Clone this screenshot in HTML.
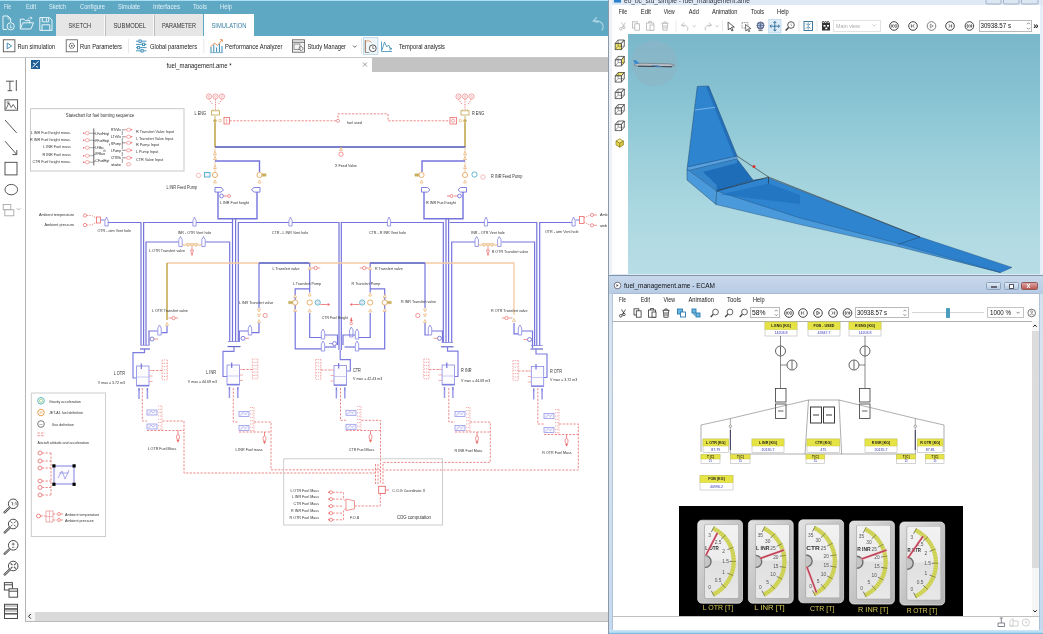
<!DOCTYPE html>
<html><head><meta charset="utf-8"><title>fuel management</title>
<style>
*{box-sizing:border-box;margin:0;padding:0}
html,body{width:1043px;height:634px;overflow:hidden;background:#fff}
body{position:relative;filter:blur(0.35px);font-family:"Liberation Sans",sans-serif;color:#222}
.abs{position:absolute}
svg{position:absolute;left:0;top:0;overflow:visible}
svg text{font-family:"Liberation Sans",sans-serif}
.t{position:absolute;white-space:nowrap;line-height:1}
</style></head>
<body>
<div class="abs" style="left:0;top:0;width:608.5px;height:35.7px;background:#5fa8c3"></div>
<div class="abs" style="left:0;top:0;width:608.5px;height:1.2px;background:#a9def3"></div>
<div class="abs" style="left:56px;top:14px;width:48.5px;height:21.5px;background:#e6e6e6"></div>
<div class="abs" style="left:105px;top:14px;width:48.5px;height:21.5px;background:#e6e6e6"></div>
<div class="abs" style="left:154px;top:14px;width:49px;height:21.5px;background:#e6e6e6"></div>
<div class="abs" style="left:203.5px;top:14px;width:50.0px;height:22.2px;background:#fff"></div>
<div class="abs" style="left:104.1px;top:14.5px;width:0.6px;height:21px;background:#f8fbfd"></div>
<div class="abs" style="left:104.8px;top:14.5px;width:0.5px;height:21px;background:#bcbcbc"></div>
<div class="abs" style="left:153.1px;top:14.5px;width:0.6px;height:21px;background:#f8fbfd"></div>
<div class="abs" style="left:153.8px;top:14.5px;width:0.5px;height:21px;background:#bcbcbc"></div>
<div class="abs" style="left:0;top:35.7px;width:608.5px;height:21.5px;background:#fff"></div>
<div class="abs" style="left:0;top:57px;width:608.5px;height:0.8px;background:#c8c8c8"></div>
<div class="abs" style="left:25px;top:57.5px;width:347px;height:15px;background:#fff;border-left:1px solid #bdbdbd"></div>
<div class="abs" style="left:372px;top:58px;width:236.5px;height:13.5px;background:#c3c3c3"></div>
<div class="abs" style="left:24.6px;top:57.5px;width:1.1px;height:563.5px;background:#b4b4b4"></div>
<div class="abs" style="left:26px;top:612px;width:582.5px;height:8.5px;background:#f4f4f4"></div>
<div class="abs" style="left:35px;top:612px;width:573.5px;height:8.5px;background:#dadada"></div>
<div class="abs" style="left:25px;top:620.6px;width:583.5px;height:1px;background:#b8b8b8"></div>
<div class="abs" style="left:608.3px;top:0;width:434.7px;height:276px;background:#dfe9f5"></div>
<div class="abs" style="left:608.3px;top:0;width:0.9px;height:634px;background:#8c9aa8"></div>
<div class="abs" style="left:609.2px;top:0;width:3.3px;height:276px;background:#edf2f9"></div>
<div class="abs" style="left:612px;top:4.6px;width:428px;height:29.4px;background:#fff"></div>
<div class="abs" style="left:612px;top:34px;width:15.6px;height:240px;background:#fff"></div>
<div class="abs" style="left:627.6px;top:33.8px;width:412px;height:240.4px;background:linear-gradient(180deg,#79b7ca 0%,#87c2d2 25%,#9bcfda 50%,#acd8e1 75%,#b8dde5 100%)"></div>
<div class="abs" style="left:1039.6px;top:4.6px;width:3.4px;height:270px;background:#e6eef8"></div>
<div class="abs" style="left:833px;top:20px;width:47.5px;height:11.6px;background:#fff;border:0.8px solid #e2e2e2"></div>
<div class="abs" style="left:979px;top:20px;width:53px;height:11.6px;background:#fff;border:0.8px solid #b8b8b8"></div>
<div class="t" style="left:1033.3px;top:20.6px;font-size:9.5px;color:#111;font-weight:bold">&raquo;</div>
<div class="abs" style="left:608.8px;top:275.4px;width:434.2px;height:358.6px;background:linear-gradient(180deg,#d2e0ef 0%,#dae5f1 30%,#cfdff0 70%,#c4d9ef 100%)"></div>
<div class="abs" style="left:609.2px;top:274.6px;width:433.8px;height:1px;background:#7f95ab"></div>
<div class="abs" style="left:609.2px;top:276px;width:433.8px;height:18px;background:linear-gradient(180deg,#c9d9ec,#b6cbe4)"></div>
<div class="abs" style="left:612.8px;top:294px;width:426.4px;height:335.8px;background:#fff;box-shadow:0 0 0 0.6px #9eb2c8"></div>
<div class="abs" style="left:608.8px;top:630.2px;width:434.2px;height:3.8px;background:linear-gradient(180deg,#cfe6f5 0%,#b4dcf2 60%,#5caed6 100%)"></div>
<div class="abs" style="left:612.3px;top:320.6px;width:426.7px;height:0.8px;background:#b0b0b0"></div>
<div class="abs" style="left:986px;top:281.6px;width:15.2px;height:8.8px;background:linear-gradient(180deg,#e0eaf5,#b6cae2);border:0.8px solid #8ea2bb;border-radius:1.5px"></div>
<div class="abs" style="left:1003.5px;top:281.6px;width:15.5px;height:8.8px;background:linear-gradient(180deg,#e0eaf5,#b6cae2);border:0.8px solid #8ea2bb;border-radius:1.5px"></div>
<div class="abs" style="left:1021.4px;top:281.6px;width:16.6px;height:8.8px;background:linear-gradient(180deg,#dca6a6,#bd5852);border:0.8px solid #8e5a5a;border-radius:1.5px"></div>
<div class="abs" style="left:990.5px;top:286.3px;width:6px;height:2.2px;background:#fff;border:0.5px solid #667"></div>
<div class="abs" style="left:1008.5px;top:284px;width:5.5px;height:4.5px;background:#fff;border:0.8px solid #556"></div>
<div class="t" style="left:1026.5px;top:282.4px;font-size:7px;color:#fff;font-weight:bold">x</div>
<div class="abs" style="left:749.6px;top:307.3px;width:30px;height:11px;background:#fff;border:0.8px solid #bbb"></div>
<div class="abs" style="left:855px;top:307.3px;width:53.5px;height:11px;background:#fff;border:0.8px solid #bbb"></div>
<div class="abs" style="left:912.4px;top:312.4px;width:71.6px;height:0.9px;background:#d4d4d4"></div>
<div class="abs" style="left:945.7px;top:308px;width:4.3px;height:9.6px;background:#4b9cbd;border-radius:0.8px"></div>
<div class="abs" style="left:987px;top:307.3px;width:37px;height:11px;background:#fff;border:0.8px solid #c4c4c4"></div>
<div class="abs" style="left:1031.5px;top:321.4px;width:7.2px;height:294.5px;background:#f6f6f6"></div>
<div class="abs" style="left:1031.5px;top:331px;width:7.2px;height:236.5px;background:#dcdcdc"></div>
<div class="abs" style="left:612.3px;top:615.8px;width:426.7px;height:0.7px;background:#c0c0c0"></div>
<div class="abs" style="left:679.2px;top:506.3px;width:284.3px;height:109.5px;background:#000"></div>
<svg width="1043" height="634" viewBox="0 0 1043 634">
<g fill="none" stroke="#e8f4f9" stroke-width="1.0"><path d="M3 16 h5 l2.6 2.6 v3.4 M3 16 v13.4 h4"/><path d="M8 16 v2.8 h2.6" stroke-width="0.7"/><circle cx="10.7" cy="26.3" r="3.6"/><path d="M10.7 24.3 v3.6 M9.2 26.6 l1.5 1.5 l1.5 -1.5" stroke-width="0.7"/><path d="M20.3 29 v-9.8 h3.8 l1.2 1.4 h4.4 v2.2"/><path d="M20.3 29 l2.6 -6.2 h10.6 l-2.6 6.2 Z"/><path d="M27.5 19.5 q2 -2.5 4.6 -1.6 m0 0 l-1.8 -1.2 m1.8 1.2 l-1.2 1.7" stroke-width="0.7"/><path d="M39.8 17.6 h9.6 l2.6 2.4 v10.4 h-12.2 Z"/><path d="M42.3 17.6 v4.2 h6.4 v-4.2 M46.5 18.3 v2.5 M42 30.4 v-5.6 h7.8 v5.6"/></g>
<path d="M596.5 17.5 l-3.3 3.6 l4.3 1.2 M593.6 21 q7.5 -1 9.3 4 q0.8 3 -0.8 5.2" fill="none" stroke="#a9d4e5" stroke-width="1.15" stroke-linecap="round"/>
<rect x="3.3" y="39.8" width="11.6" height="12" fill="#fff" stroke="#444" stroke-width="0.8"/><path d="M7.2 43 l4.4 2.9 l-4.4 2.9 Z" fill="#fff" stroke="#2f7fb0" stroke-width="0.9"/>
<rect x="66.2" y="39.8" width="11.2" height="12" fill="#fff" stroke="#555" stroke-width="0.8"/><circle cx="71.8" cy="45.8" r="2.5" fill="none" stroke="#555" stroke-width="1.1" stroke-dasharray="1 0.6"/><circle cx="71.8" cy="45.8" r="0.9" fill="#555"/>
<g stroke="#3a8ab4" stroke-width="0.9" fill="#fff"><path d="M136 41.2 h10.5 M136 44.4 h10.5 M136 47.6 h10.5 M136 50.8 h10.5" /><rect x="139" y="40" width="2.2" height="2.4"/><rect x="142.5" y="43.2" width="2.2" height="2.4"/><rect x="137.5" y="46.4" width="2.2" height="2.4"/><rect x="141" y="49.6" width="2.2" height="2.4"/></g>
<g fill="none"><path d="M211 52 v-5 M213.8 52 v-7.5 M216.6 52 v-4.5 M219.4 52 v-8.5 M222 52 v-6" stroke="#3a8ab4" stroke-width="1"/><path d="M210.5 47 l4 -4 l3 2.5 l4.5 -5.5" stroke="#e0884a" stroke-width="0.9"/><path d="M220 39.6 h2.3 v2.3" stroke="#e0884a" stroke-width="0.8"/><path d="M210 52.6 h13" stroke="#3a8ab4" stroke-width="0.7"/></g>
<g fill="none" stroke="#555" stroke-width="0.8"><rect x="292.5" y="39.8" width="12" height="12.4" fill="#f2f2f2"/><path d="M292.5 42.3 h12" /><rect x="294" y="44" width="6" height="5.5" stroke-width="0.6"/><circle cx="301" cy="48.5" r="2" stroke-width="1" stroke-dasharray="0.9 0.5"/></g>
<path d="M353 45.5 l1.8 1.8 l1.8 -1.8" fill="none" stroke="#444" stroke-width="0.8"/>
<path d="M361.5 38.5 v15" stroke="#d8d8d8" stroke-width="0.7"/>
<rect x="363.3" y="37.7" width="14.6" height="16.6" fill="#f0f7fb" stroke="#a8cce0" stroke-width="0.7"/>
<g fill="none"><path d="M365.5 52 v-11 q3.5 -1 6 1.2" stroke="#e0884a" stroke-width="0.8"/><path d="M365.2 40 v12.5 h4" stroke="#666" stroke-width="0.7"/><circle cx="372.8" cy="48.3" r="3.4" stroke="#444" stroke-width="0.9" fill="#fff"/><path d="M372.8 46.2 v2.3 h1.6" stroke="#444" stroke-width="0.7"/></g>
<g fill="none"><path d="M381.5 51.5 v-10 M381.5 51.5 h10.5" stroke="#3a8ab4" stroke-width="0.8"/><path d="M382 50 l2.5 -8 l2.3 5 l1.8 -2 l2.2 4.5" stroke="#3a8ab4" stroke-width="0.8"/><path d="M389 47.5 l3 1.2 l-2.7 1.6" stroke="#3a8ab4" stroke-width="0.7"/></g>
<path d="M128.5 39 v14 M203.8 39 v14" stroke="#e0e0e0" stroke-width="0.7"/>
<rect x="31" y="60" width="9" height="9" fill="#1f5f96"/><path d="M32.3 67.5 l6.2 -6.3 M33 63 l2 1 M36 66.3 l2 1" stroke="#fff" stroke-width="1" fill="none"/>
<path d="M363 62.5 l4 4 M367 62.5 l-4 4" stroke="#777" stroke-width="0.7"/>
<g fill="none" stroke="#444" stroke-width="0.9"><path d="M6 81.2 h7.8 M9.9 81.2 v9.5 M7.6 90.7 h4.6 M16.3 80 v11"/><rect x="5" y="99.8" width="12.6" height="10.4"/><path d="M6 109 l2.8 -6 l2.4 4.5 l2 -3 l3 4.5" stroke-width="0.8"/><circle cx="8" cy="102.5" r="1" stroke-width="0.6"/><path d="M5 120 L16.6 132.8"/><path d="M5 141.2 L16.6 154.3 M16.8 150 v4.6 h-4.4"/><rect x="5" y="162.3" width="12" height="12.6"/><ellipse cx="11.3" cy="189.6" rx="6.3" ry="5.2"/></g>
<g fill="#fff" stroke="#a8a8a8" stroke-width="0.9"><rect x="3.2" y="204.5" width="7.6" height="5.2"/><rect x="4.8" y="209.8" width="9" height="6"/><path d="M16.8 208.2 l1.8 1.8 l1.8 -1.8" fill="none"/></g>
<g fill="none" stroke="#4a4a4a" stroke-width="1.0"><path d="M10.0 507.2 L4.6 512.4" stroke-width="2.2" stroke-linecap="round"/><path d="M10.0 507.2 L4.6 512.4" stroke="#fff" stroke-width="0.7" stroke-linecap="round"/><circle cx="13.2" cy="503.8" r="4.8" fill="#fff"/><path d="M11.3 502.3 h1.2 v3 M14.2 503 v0.5 M14.2 504.8 v0.5 M15.3 502.3 h0.8 v3" stroke-width="0.7"/></g>
<g fill="none" stroke="#4a4a4a" stroke-width="1.0"><path d="M10.0 527.4 L4.6 532.6" stroke-width="2.2" stroke-linecap="round"/><path d="M10.0 527.4 L4.6 532.6" stroke="#fff" stroke-width="0.7" stroke-linecap="round"/><circle cx="13.2" cy="524" r="4.8" fill="#fff"/><path d="M10.6 521.4 l1.8 1.8 M15.8 521.4 l-1.8 1.8 M10.6 526.6 l1.8 -1.8 M15.8 526.6 l-1.8 -1.8" stroke-width="0.9"/></g>
<g fill="none" stroke="#4a4a4a" stroke-width="1.0"><path d="M10.0 548.6999999999999 L4.6 553.9" stroke-width="2.2" stroke-linecap="round"/><path d="M10.0 548.6999999999999 L4.6 553.9" stroke="#fff" stroke-width="0.7" stroke-linecap="round"/><circle cx="13.2" cy="545.3" r="4.8" fill="#fff"/><path d="M13.2 542.6 v3 M11.7 544.1 h3 M12 547.3 h2.4" stroke-width="0.7"/></g>
<g fill="none" stroke="#4a4a4a" stroke-width="1.0"><path d="M10.0 569.4 L4.6 574.6" stroke-width="2.2" stroke-linecap="round"/><path d="M10.0 569.4 L4.6 574.6" stroke="#fff" stroke-width="0.7" stroke-linecap="round"/><circle cx="13.2" cy="566" r="4.8" fill="#fff"/><path d="M10.6 563.4 l1.8 1.8 M15.8 563.4 l-1.8 1.8 M10.6 568.6 l1.8 -1.8 M15.8 568.6 l-1.8 -1.8" stroke-width="1.1"/></g>
<g fill="#fff" stroke="#4a4a4a" stroke-width="1"><rect x="4.4" y="582.6" width="8" height="7.4"/><path d="M4.4 584.8 h8"/><rect x="9" y="588.8" width="8.6" height="8.4"/><path d="M9 591.2 h8.6"/></g>
<g fill="#fff" stroke="#4a4a4a" stroke-width="1"><rect x="4.5" y="604.3" width="13" height="4.5"/><rect x="4.5" y="609.2" width="13" height="4.5"/><rect x="4.5" y="614" width="13" height="4.5"/><path d="M4.5 606 h13 M4.5 611 h13" stroke-width="0.6"/></g>
<path d="M30.8 614 l-2.2 2.3 l2.2 2.3" fill="none" stroke="#222" stroke-width="1"/>
<rect x="30.5" y="108.7" width="153.5" height="62.3" fill="#fff" stroke="#c4c4c4" stroke-width="0.9" />
<text x="100.0" y="117.1" font-size="4.56" text-anchor="middle" fill="#333" font-weight="normal" textLength="68.3" lengthAdjust="spacingAndGlyphs" >Statechart for fuel burning sequence</text>
<text x="71.0" y="133.5" font-size="4.37" text-anchor="end" fill="#333" font-weight="normal" textLength="40.3" lengthAdjust="spacingAndGlyphs" >L INR Fuel height meas.</text>
<path d="M83 132.2 l2 1 l-2 1 Z" fill="#ea6a6a"/>
<ellipse cx="87.2" cy="133.2" rx="2" ry="1.6" fill="#fff" stroke="#f08c8c" stroke-width="0.7"/>
<path d="M89.2 133.2 L93.8 133.2" fill="none" stroke="#555" stroke-width="0.5" />
<text x="71.0" y="140.5" font-size="4.37" text-anchor="end" fill="#333" font-weight="normal" textLength="41.1" lengthAdjust="spacingAndGlyphs" >R INR Fuel height meas.</text>
<path d="M83 139.2 l2 1 l-2 1 Z" fill="#ea6a6a"/>
<ellipse cx="87.2" cy="140.2" rx="2" ry="1.6" fill="#fff" stroke="#f08c8c" stroke-width="0.7"/>
<path d="M89.2 140.2 L93.8 140.2" fill="none" stroke="#555" stroke-width="0.5" />
<text x="71.0" y="148.0" font-size="4.37" text-anchor="end" fill="#333" font-weight="normal" textLength="27.8" lengthAdjust="spacingAndGlyphs" >L INR Fuel mass</text>
<path d="M83 146.7 l2 1 l-2 1 Z" fill="#ea6a6a"/>
<ellipse cx="87.2" cy="147.7" rx="2" ry="1.6" fill="#fff" stroke="#f08c8c" stroke-width="0.7"/>
<path d="M89.2 147.7 L93.8 147.7" fill="none" stroke="#555" stroke-width="0.5" />
<text x="71.0" y="156.0" font-size="4.37" text-anchor="end" fill="#333" font-weight="normal" textLength="28.6" lengthAdjust="spacingAndGlyphs" >R INR Fuel mass</text>
<path d="M83 154.7 l2 1 l-2 1 Z" fill="#ea6a6a"/>
<ellipse cx="87.2" cy="155.7" rx="2" ry="1.6" fill="#fff" stroke="#f08c8c" stroke-width="0.7"/>
<path d="M89.2 155.7 L93.8 155.7" fill="none" stroke="#555" stroke-width="0.5" />
<text x="71.0" y="162.5" font-size="4.37" text-anchor="end" fill="#333" font-weight="normal" textLength="38.6" lengthAdjust="spacingAndGlyphs" >CTR Fuel height meas.</text>
<path d="M83 161.2 l2 1 l-2 1 Z" fill="#ea6a6a"/>
<ellipse cx="87.2" cy="162.2" rx="2" ry="1.6" fill="#fff" stroke="#f08c8c" stroke-width="0.7"/>
<path d="M89.2 162.2 L93.8 162.2" fill="none" stroke="#555" stroke-width="0.5" />
<path d="M93.8 128.4 L93.8 165.4" fill="none" stroke="#222" stroke-width="0.7" />
<text x="95.6" y="134.6" font-size="3.4" fill="#222" textLength="13.5" lengthAdjust="spacingAndGlyphs">LFuelHeigt</text>
<path d="M93.8 133.5 L95.4 133.5" fill="none" stroke="#333" stroke-width="0.5" />
<text x="95.6" y="141.7" font-size="3.4" fill="#222" textLength="13.5" lengthAdjust="spacingAndGlyphs">RFuelHeigt</text>
<path d="M93.8 140.6 L95.4 140.6" fill="none" stroke="#333" stroke-width="0.5" />
<text x="95.6" y="148.5" font-size="3.4" fill="#222" textLength="9.5" lengthAdjust="spacingAndGlyphs">LFMas_</text>
<path d="M93.8 147.4 L95.4 147.4" fill="none" stroke="#333" stroke-width="0.5" />
<text x="95.6" y="155.4" font-size="3.4" fill="#222" textLength="9.5" lengthAdjust="spacingAndGlyphs">RFMass</text>
<path d="M93.8 154.3 L95.4 154.3" fill="none" stroke="#333" stroke-width="0.5" />
<text x="95.6" y="162.4" font-size="3.4" fill="#222" textLength="13.5" lengthAdjust="spacingAndGlyphs">CFuelHgt</text>
<path d="M93.8 161.3 L95.4 161.3" fill="none" stroke="#333" stroke-width="0.5" />
<text x="111" y="130.6" font-size="3.4" fill="#222" textLength="10" lengthAdjust="spacingAndGlyphs">RTrVlv</text>
<text x="111" y="138.0" font-size="3.4" fill="#222" textLength="10" lengthAdjust="spacingAndGlyphs">LTrVlv</text>
<text x="111" y="144.8" font-size="3.4" fill="#222" textLength="10" lengthAdjust="spacingAndGlyphs">RPump</text>
<text x="111" y="151.7" font-size="3.4" fill="#222" textLength="10" lengthAdjust="spacingAndGlyphs">LPump</text>
<text x="111" y="158.5" font-size="3.4" fill="#222" textLength="10" lengthAdjust="spacingAndGlyphs">CTRVlv</text>
<text x="111" y="165.9" font-size="3.4" fill="#222" textLength="10" lengthAdjust="spacingAndGlyphs">state</text>
<path d="M109.5 143.5 L109.5 145.5" fill="none" stroke="#333" stroke-width="0.5" />
<path d="M103.0 151.0 L106.0 151.0" fill="none" stroke="#333" stroke-width="0.6" />
<path d="M122.3 131.0 L122.3 135.0" fill="none" stroke="#333" stroke-width="0.5" />
<path d="M122.3 138.0 L122.3 149.0" fill="none" stroke="#333" stroke-width="0.5" />
<path d="M122.3 152.0 L122.3 156.0" fill="none" stroke="#333" stroke-width="0.5" />
<path d="M122.3 159.0 L122.3 163.0" fill="none" stroke="#333" stroke-width="0.5" />
<text x="136.0" y="132.5" font-size="4.37" text-anchor="start" fill="#333" font-weight="normal" textLength="38.1" lengthAdjust="spacingAndGlyphs" >R Transfert Valve Input</text>
<path d="M122.0 129.8 L125.0 129.8" fill="none" stroke="#444" stroke-width="0.6" />
<ellipse cx="128.6" cy="129.8" rx="2.1" ry="1.6" fill="#fff" stroke="#f08c8c" stroke-width="0.7"/>
<path d="M125.0 129.8 L126.5 129.8" fill="none" stroke="#ea6a6a" stroke-width="0.7" />
<path d="M130.7 128.8 l2 1 l-2 1 Z" fill="#ea6a6a"/>
<text x="136.0" y="139.5" font-size="4.37" text-anchor="start" fill="#333" font-weight="normal" textLength="37.3" lengthAdjust="spacingAndGlyphs" >L Transfert Valve Input</text>
<path d="M122.0 136.8 L125.0 136.8" fill="none" stroke="#444" stroke-width="0.6" />
<ellipse cx="128.6" cy="136.8" rx="2.1" ry="1.6" fill="#fff" stroke="#f08c8c" stroke-width="0.7"/>
<path d="M125.0 136.8 L126.5 136.8" fill="none" stroke="#ea6a6a" stroke-width="0.7" />
<path d="M130.7 135.8 l2 1 l-2 1 Z" fill="#ea6a6a"/>
<text x="136.0" y="145.5" font-size="4.37" text-anchor="start" fill="#333" font-weight="normal" textLength="23.0" lengthAdjust="spacingAndGlyphs" >R Pump Input</text>
<path d="M122.0 142.8 L125.0 142.8" fill="none" stroke="#444" stroke-width="0.6" />
<ellipse cx="128.6" cy="142.8" rx="2.1" ry="1.6" fill="#fff" stroke="#f08c8c" stroke-width="0.7"/>
<path d="M125.0 142.8 L126.5 142.8" fill="none" stroke="#ea6a6a" stroke-width="0.7" />
<path d="M130.7 141.8 l2 1 l-2 1 Z" fill="#ea6a6a"/>
<text x="136.0" y="153.0" font-size="4.37" text-anchor="start" fill="#333" font-weight="normal" textLength="22.2" lengthAdjust="spacingAndGlyphs" >L Pump Input</text>
<path d="M122.0 150.3 L125.0 150.3" fill="none" stroke="#444" stroke-width="0.6" />
<ellipse cx="128.6" cy="150.3" rx="2.1" ry="1.6" fill="#fff" stroke="#f08c8c" stroke-width="0.7"/>
<path d="M125.0 150.3 L126.5 150.3" fill="none" stroke="#ea6a6a" stroke-width="0.7" />
<path d="M130.7 149.3 l2 1 l-2 1 Z" fill="#ea6a6a"/>
<text x="136.0" y="160.5" font-size="4.37" text-anchor="start" fill="#333" font-weight="normal" textLength="27.3" lengthAdjust="spacingAndGlyphs" >CTR Valve Input</text>
<path d="M122.0 157.8 L125.0 157.8" fill="none" stroke="#444" stroke-width="0.6" />
<ellipse cx="128.6" cy="157.8" rx="2.1" ry="1.6" fill="#fff" stroke="#f08c8c" stroke-width="0.7"/>
<path d="M125.0 157.8 L126.5 157.8" fill="none" stroke="#ea6a6a" stroke-width="0.7" />
<path d="M130.7 156.8 l2 1 l-2 1 Z" fill="#ea6a6a"/>
<ellipse cx="128.6" cy="164.3" rx="2.1" ry="1.6" fill="#fff" stroke="#f08c8c" stroke-width="0.7"/>
<circle cx="209.0" cy="96.5" r="2.6" fill="#fff" stroke="#f08c8c" stroke-width="0.8"/>
<circle cx="209.0" cy="96.5" r="0.9" fill="#fff" stroke="#f08c8c" stroke-width="0.5"/>
<path d="M209.0 99.1 L212.6 104.5" fill="none" stroke="#ea6a6a" stroke-width="0.7" stroke-dasharray="1.4 0.9" />
<circle cx="215.5" cy="96.5" r="2.6" fill="#fff" stroke="#f08c8c" stroke-width="0.8"/>
<circle cx="215.5" cy="96.5" r="0.9" fill="#fff" stroke="#f08c8c" stroke-width="0.5"/>
<path d="M215.5 99.1 L215.5 104.5" fill="none" stroke="#ea6a6a" stroke-width="0.7" stroke-dasharray="1.4 0.9" />
<circle cx="222.0" cy="96.5" r="2.6" fill="#fff" stroke="#f08c8c" stroke-width="0.8"/>
<circle cx="222.0" cy="96.5" r="0.9" fill="#fff" stroke="#f08c8c" stroke-width="0.5"/>
<path d="M222.0 99.1 L218.4 104.5" fill="none" stroke="#ea6a6a" stroke-width="0.7" stroke-dasharray="1.4 0.9" />
<path d="M215.5 104.0 L215.5 110.5" fill="none" stroke="#ea6a6a" stroke-width="0.7" stroke-dasharray="1.4 0.9" />
<rect x="211.5" y="110.8" width="8.0" height="4.2" fill="#fff" stroke="#c9b060" stroke-width="0.9" />
<path d="M213.0 110.8 L213.0 109.3" fill="none" stroke="#c9b060" stroke-width="0.8" />
<path d="M218.0 110.8 L218.0 109.3" fill="none" stroke="#c9b060" stroke-width="0.8" />
<text x="206.0" y="114.6" font-size="4.46" text-anchor="end" fill="#333" font-weight="normal" textLength="11.4" lengthAdjust="spacingAndGlyphs" >L ENG</text>
<circle cx="458.5" cy="96.5" r="2.6" fill="#fff" stroke="#f08c8c" stroke-width="0.8"/>
<circle cx="458.5" cy="96.5" r="0.9" fill="#fff" stroke="#f08c8c" stroke-width="0.5"/>
<path d="M458.5 99.1 L462.1 104.5" fill="none" stroke="#ea6a6a" stroke-width="0.7" stroke-dasharray="1.4 0.9" />
<circle cx="465.0" cy="96.5" r="2.6" fill="#fff" stroke="#f08c8c" stroke-width="0.8"/>
<circle cx="465.0" cy="96.5" r="0.9" fill="#fff" stroke="#f08c8c" stroke-width="0.5"/>
<path d="M465.0 99.1 L465.0 104.5" fill="none" stroke="#ea6a6a" stroke-width="0.7" stroke-dasharray="1.4 0.9" />
<circle cx="471.5" cy="96.5" r="2.6" fill="#fff" stroke="#f08c8c" stroke-width="0.8"/>
<circle cx="471.5" cy="96.5" r="0.9" fill="#fff" stroke="#f08c8c" stroke-width="0.5"/>
<path d="M471.5 99.1 L467.9 104.5" fill="none" stroke="#ea6a6a" stroke-width="0.7" stroke-dasharray="1.4 0.9" />
<path d="M465.0 104.0 L465.0 110.5" fill="none" stroke="#ea6a6a" stroke-width="0.7" stroke-dasharray="1.4 0.9" />
<rect x="461.0" y="110.8" width="8.0" height="4.2" fill="#fff" stroke="#c9b060" stroke-width="0.9" />
<path d="M462.5 110.8 L462.5 109.3" fill="none" stroke="#c9b060" stroke-width="0.8" />
<path d="M467.5 110.8 L467.5 109.3" fill="none" stroke="#c9b060" stroke-width="0.8" />
<text x="472.0" y="114.6" font-size="4.46" text-anchor="start" fill="#333" font-weight="normal" textLength="12.2" lengthAdjust="spacingAndGlyphs" >R ENG</text>
<circle cx="215.0" cy="120.7" r="1.5" fill="#c9b060" stroke="#c9b060" stroke-width="0.6"/>
<path d="M215.0 116.0 L215.0 119.0" fill="none" stroke="#c9b060" stroke-width="0.9" />
<circle cx="220.0" cy="120.7" r="1.3" fill="#fff" stroke="#e8a860" stroke-width="0.6"/>
<rect x="224.0" y="117.5" width="5.5" height="6.5" fill="#fff" stroke="#ea6a6a" stroke-width="0.8" />
<path d="M226.7 118.5 L226.7 123.0" fill="none" stroke="#ea6a6a" stroke-width="0.6" />
<circle cx="465.0" cy="120.7" r="1.5" fill="#c9b060" stroke="#c9b060" stroke-width="0.6"/>
<path d="M465.0 116.0 L465.0 119.0" fill="none" stroke="#c9b060" stroke-width="0.9" />
<circle cx="460.5" cy="120.7" r="1.3" fill="#fff" stroke="#e8a860" stroke-width="0.6"/>
<rect x="450.0" y="117.5" width="6.5" height="6.5" fill="#fff" stroke="#ea6a6a" stroke-width="0.8" />
<circle cx="453.2" cy="120.7" r="1.6" fill="#fff" stroke="#ea6a6a" stroke-width="0.6"/>
<path d="M229.5 120.8 L338.0 120.8 L338.0 113.8 L388.0 113.8 L388.0 120.8 L450.0 120.8" fill="none" stroke="#ea6a6a" stroke-width="0.8" stroke-dasharray="2.2 1.4" />
<circle cx="338.0" cy="120.8" r="1.6" fill="#fff" stroke="#ea6a6a" stroke-width="0.6"/>
<text x="347.0" y="124.3" font-size="4.27" text-anchor="start" fill="#333" font-weight="normal" textLength="14.9" lengthAdjust="spacingAndGlyphs" >fuel used</text>
<path d="M215.0 122.5 L215.0 147.0" fill="none" stroke="#c9b060" stroke-width="1.8" />
<path d="M465.0 122.5 L465.0 147.0" fill="none" stroke="#c9b060" stroke-width="1.8" />
<path d="M215.0 147.0 L465.5 147.0" fill="none" stroke="#4c54b8" stroke-width="1.7" />
<path d="M341.0 147.0 L341.0 151.0" fill="none" stroke="#e8a860" stroke-width="0.9" />
<path d="M339.5 150.5 L341.0 147.5 L342.5 150.5 Z" fill="#fff" stroke="#e8a860" stroke-width="0.6"/>
<circle cx="341.0" cy="154.2" r="2.2" fill="#fff" stroke="#ea6a6a" stroke-width="0.7"/>
<text x="346.0" y="166.5" font-size="4.27" text-anchor="middle" fill="#333" font-weight="normal" textLength="21.8" lengthAdjust="spacingAndGlyphs" >X Feed Valve</text>
<path d="M215.0 147.5 L215.0 172.0" fill="none" stroke="#f0c8a0" stroke-width="0.9" />
<path d="M213.5 154.5 L215.0 151.5 L216.5 154.5 Z" fill="#fff" stroke="#e8a860" stroke-width="0.6"/>
<path d="M213.5 159.5 L215.0 156.5 L216.5 159.5 Z" fill="#fff" stroke="#e8a860" stroke-width="0.6"/>
<path d="M213.5 168.5 L215.0 165.5 L216.5 168.5 Z" fill="#fff" stroke="#e8a860" stroke-width="0.6"/>
<path d="M213.5 183.0 L215.0 180.0 L216.5 183.0 Z" fill="#fff" stroke="#e8a860" stroke-width="0.6"/>
<path d="M465.0 147.5 L465.0 172.0" fill="none" stroke="#f0c8a0" stroke-width="0.9" />
<path d="M463.5 154.5 L465.0 151.5 L466.5 154.5 Z" fill="#fff" stroke="#e8a860" stroke-width="0.6"/>
<path d="M463.5 159.5 L465.0 156.5 L466.5 159.5 Z" fill="#fff" stroke="#e8a860" stroke-width="0.6"/>
<path d="M463.5 168.5 L465.0 165.5 L466.5 168.5 Z" fill="#fff" stroke="#e8a860" stroke-width="0.6"/>
<path d="M463.5 183.0 L465.0 180.0 L466.5 183.0 Z" fill="#fff" stroke="#e8a860" stroke-width="0.6"/>
<path d="M215.0 161.0 L259.5 161.0 L259.5 172.0" fill="none" stroke="#7474dc" stroke-width="1.4" />
<path d="M465.0 161.0 L422.0 161.0 L422.0 172.0" fill="none" stroke="#7474dc" stroke-width="1.4" />
<circle cx="215.0" cy="175.0" r="2.6" fill="#fff" stroke="#e8a860" stroke-width="0.9"/>
<circle cx="259.5" cy="175.0" r="2.6" fill="#fff" stroke="#e8a860" stroke-width="0.9"/>
<path d="M262.1 173.8 h4 v2.4 h-4 Z" fill="#c9b060" stroke="#c9b060" stroke-width="0.5"/>
<path d="M258.0 183.0 L259.5 180.0 L261.0 183.0 Z" fill="#fff" stroke="#e8a860" stroke-width="0.6"/>
<circle cx="465.0" cy="175.0" r="2.6" fill="#fff" stroke="#e8a860" stroke-width="0.9"/>
<circle cx="421.5" cy="175.0" r="2.6" fill="#fff" stroke="#e8a860" stroke-width="0.9"/>
<path d="M418.9 173.8 h-4 v2.4 h4 Z" fill="#c9b060" stroke="#c9b060" stroke-width="0.5"/>
<path d="M420.0 183.0 L421.5 180.0 L423.0 183.0 Z" fill="#fff" stroke="#e8a860" stroke-width="0.6"/>
<rect x="204.5" y="172.5" width="5.5" height="4.5" fill="#eef" stroke="#50b0c8" stroke-width="0.9" />
<circle cx="198.5" cy="175.5" r="2.2" fill="#fff" stroke="#f0a0a0" stroke-width="0.7"/>
<circle cx="474.5" cy="174.5" r="2.6" fill="#fff" stroke="#50b0c8" stroke-width="0.9"/>
<circle cx="483.0" cy="177.0" r="2.2" fill="#fff" stroke="#f0a0a0" stroke-width="0.7"/>
<text x="197.0" y="188.6" font-size="4.46" text-anchor="end" fill="#333" font-weight="normal" textLength="30.6" lengthAdjust="spacingAndGlyphs" >L INR Feed Pump</text>
<text x="491.0" y="178.4" font-size="4.46" text-anchor="start" fill="#333" font-weight="normal" textLength="31.3" lengthAdjust="spacingAndGlyphs" >R INR Feed Pump</text>
<path d="M215.0 187.5 h6 l2.5 2.3 l-2.5 2.3 h-6 Z" fill="#fff" stroke="#7474dc" stroke-width="0.9"/>
<path d="M260.0 187.5 h-6 l-2.5 2.3 l2.5 2.3 h6 Z" fill="#fff" stroke="#7474dc" stroke-width="0.9"/>
<path d="M421.5 187.5 h6 l2.5 2.3 l-2.5 2.3 h-6 Z" fill="#fff" stroke="#7474dc" stroke-width="0.9"/>
<path d="M466.5 187.5 h-6 l-2.5 2.3 l2.5 2.3 h6 Z" fill="#fff" stroke="#7474dc" stroke-width="0.9"/>
<circle cx="221.5" cy="196.0" r="1.9" fill="#fff" stroke="#7474dc" stroke-width="0.9"/>
<path d="M223.5 196.0 L227.0 196.0" fill="none" stroke="#ea6a6a" stroke-width="0.8" />
<circle cx="229.0" cy="196.0" r="1.5" fill="#fff" stroke="#ea6a6a" stroke-width="0.7"/>
<circle cx="459.5" cy="196.0" r="1.9" fill="#fff" stroke="#7474dc" stroke-width="0.9"/>
<path d="M457.5 196.0 L454.0 196.0" fill="none" stroke="#ea6a6a" stroke-width="0.8" />
<circle cx="451.5" cy="196.0" r="1.5" fill="#fff" stroke="#ea6a6a" stroke-width="0.7"/>
<path d="M450.0 196.0 L447.0 196.0" fill="none" stroke="#ea6a6a" stroke-width="0.8" />
<text x="220.0" y="203.8" font-size="4.37" text-anchor="start" fill="#333" font-weight="normal" textLength="29.1" lengthAdjust="spacingAndGlyphs" >L INR Fuel height</text>
<text x="426.0" y="203.8" font-size="4.37" text-anchor="start" fill="#333" font-weight="normal" textLength="29.8" lengthAdjust="spacingAndGlyphs" >R INR Fuel height</text>
<path d="M218.0 192.0 L218.0 218.8 L257.0 218.8 L257.0 192.0" fill="none" stroke="#7474dc" stroke-width="1.4" />
<path d="M424.0 192.0 L424.0 218.8 L463.0 218.8 L463.0 192.0" fill="none" stroke="#7474dc" stroke-width="1.4" />
<text x="74.0" y="215.5" font-size="4.37" text-anchor="end" fill="#333" font-weight="normal" textLength="35.1" lengthAdjust="spacingAndGlyphs" >Ambient temperature</text>
<text x="74.0" y="225.5" font-size="4.37" text-anchor="end" fill="#333" font-weight="normal" textLength="29.4" lengthAdjust="spacingAndGlyphs" >Ambient pressure</text>
<circle cx="85.0" cy="215.5" r="1.7" fill="#fff" stroke="#ea6a6a" stroke-width="0.7"/>
<path d="M86.7 215.5 L91.5 215.5" fill="none" stroke="#ea6a6a" stroke-width="0.7" stroke-dasharray="1.5 1" />
<circle cx="85.0" cy="225.0" r="1.7" fill="#fff" stroke="#ea6a6a" stroke-width="0.7"/>
<path d="M86.7 225.0 L91.5 225.0" fill="none" stroke="#ea6a6a" stroke-width="0.7" stroke-dasharray="1.5 1" />
<rect x="96.5" y="217.0" width="4.0" height="6.0" fill="#fff" stroke="#ea6a6a" stroke-width="0.8" />
<path d="M92.0 215.5 L96.5 218.5" fill="none" stroke="#ea6a6a" stroke-width="0.7" stroke-dasharray="1.4 0.9" />
<path d="M92.0 225.0 L96.5 222.0" fill="none" stroke="#ea6a6a" stroke-width="0.7" stroke-dasharray="1.4 0.9" />
<path d="M104.9 226.0 V220.5 L106.5 217.0 L108.1 220.5 V226.0 Z" fill="#fff" stroke="#8484e2" stroke-width="0.8"/>
<path d="M100.5 220.0 L104.7 220.0" fill="none" stroke="#7474dc" stroke-width="0.9" />
<text x="97.5" y="231.8" font-size="4.27" text-anchor="start" fill="#333" font-weight="normal" textLength="33.5" lengthAdjust="spacingAndGlyphs" >OTR - atm Vent hole</text>
<rect x="579.5" y="216.5" width="4.5" height="7.0" fill="#fff" stroke="#ea6a6a" stroke-width="0.8" />
<circle cx="592.0" cy="215.0" r="1.6" fill="#fff" stroke="#ea6a6a" stroke-width="0.7"/>
<circle cx="592.0" cy="225.3" r="1.6" fill="#fff" stroke="#ea6a6a" stroke-width="0.7"/>
<path d="M584.0 218.0 L590.4 215.0" fill="none" stroke="#ea6a6a" stroke-width="0.7" stroke-dasharray="1.4 0.9" />
<path d="M584.0 222.0 L590.4 225.3" fill="none" stroke="#ea6a6a" stroke-width="0.7" stroke-dasharray="1.4 0.9" />
<path d="M593.6 215.0 L597.0 215.0" fill="none" stroke="#ea6a6a" stroke-width="0.7" />
<path d="M593.6 225.3 L597.0 225.3" fill="none" stroke="#ea6a6a" stroke-width="0.7" />
<text x="600.0" y="216.0" font-size="4.27" text-anchor="start" fill="#333" font-weight="normal" textLength="7.5" lengthAdjust="spacingAndGlyphs" >Amb</text>
<text x="600.0" y="226.5" font-size="4.27" text-anchor="start" fill="#333" font-weight="normal" textLength="7.1" lengthAdjust="spacingAndGlyphs" >amb</text>
<path d="M575.5 220.0 L579.5 220.0" fill="none" stroke="#7474dc" stroke-width="0.9" />
<text x="545.0" y="232.5" font-size="4.27" text-anchor="start" fill="#333" font-weight="normal" textLength="33.5" lengthAdjust="spacingAndGlyphs" >OTR - atm Vent hole</text>
<path d="M108.0 222.5 L141.0 222.5 L141.0 345.0" fill="none" stroke="#7474dc" stroke-width="1.2" />
<path d="M143.6 345.0 L143.6 222.5 L232.5 222.5" fill="none" stroke="#7474dc" stroke-width="1.2" />
<path d="M232.5 218.8 L232.5 342.0" fill="none" stroke="#7474dc" stroke-width="1.2" />
<path d="M235.6 218.8 L235.6 342.0" fill="none" stroke="#7474dc" stroke-width="1.2" />
<path d="M238.3 342.0 L238.3 222.5 L339.0 222.5 L339.0 350.0" fill="none" stroke="#7474dc" stroke-width="1.2" />
<path d="M341.3 350.0 L341.3 222.5 L443.3 222.5 L443.3 342.0" fill="none" stroke="#7474dc" stroke-width="1.2" />
<path d="M446.0 218.8 L446.0 342.0" fill="none" stroke="#7474dc" stroke-width="1.2" />
<path d="M448.6 218.8 L448.6 342.0" fill="none" stroke="#7474dc" stroke-width="1.2" />
<path d="M451.7 342.0 L451.7 242.0 L476.0 242.0" fill="none" stroke="#7474dc" stroke-width="1.2" />
<path d="M449.5 222.5 L536.8 222.5 L536.8 346.0" fill="none" stroke="#7474dc" stroke-width="1.2" />
<path d="M539.7 346.0 L539.7 222.5 L573.0 222.5" fill="none" stroke="#7474dc" stroke-width="1.2" />
<path d="M192.9 226.0 V220.5 L194.5 217.0 L196.1 220.5 V226.0 Z" fill="#fff" stroke="#8484e2" stroke-width="0.8"/>
<path d="M288.9 226.0 V220.5 L290.5 217.0 L292.1 220.5 V226.0 Z" fill="#fff" stroke="#8484e2" stroke-width="0.8"/>
<path d="M387.4 226.0 V220.5 L389.0 217.0 L390.6 220.5 V226.0 Z" fill="#fff" stroke="#8484e2" stroke-width="0.8"/>
<path d="M484.4 226.0 V220.5 L486.0 217.0 L487.6 220.5 V226.0 Z" fill="#fff" stroke="#8484e2" stroke-width="0.8"/>
<path d="M572.0 226.0 V220.5 L573.6 217.0 L575.2 220.5 V226.0 Z" fill="#fff" stroke="#8484e2" stroke-width="0.8"/>
<text x="194.5" y="233.5" font-size="4.27" text-anchor="middle" fill="#333" font-weight="normal" textLength="33.7" lengthAdjust="spacingAndGlyphs" >INR - OTR Vent hole</text>
<text x="290.0" y="233.5" font-size="4.27" text-anchor="middle" fill="#333" font-weight="normal" textLength="36.4" lengthAdjust="spacingAndGlyphs" >CTR - L INR Vent hole</text>
<text x="387.5" y="233.5" font-size="4.27" text-anchor="middle" fill="#333" font-weight="normal" textLength="37.1" lengthAdjust="spacingAndGlyphs" >CTR - R INR Vent hole</text>
<text x="488.0" y="233.5" font-size="4.27" text-anchor="middle" fill="#333" font-weight="normal" textLength="33.7" lengthAdjust="spacingAndGlyphs" >INR - OTR Vent hole</text>
<path d="M146.0 345.0 L146.0 242.0 L178.5 242.0" fill="none" stroke="#7474dc" stroke-width="1.2" />
<path d="M205.5 242.0 L229.7 242.0 L229.7 342.0" fill="none" stroke="#7474dc" stroke-width="1.2" />
<path d="M178.8 246.5 V239.5 L180.5 236.5 L182.2 239.5 V246.5 Z" fill="#fff" stroke="#8484e2" stroke-width="0.8"/>
<path d="M201.8 246.5 V239.5 L203.5 236.5 L205.2 239.5 V246.5 Z" fill="#fff" stroke="#8484e2" stroke-width="0.8"/>
<path d="M182.5 245.0 L201.5 245.0" fill="none" stroke="#e8a860" stroke-width="0.8" />
<path d="M186.5 243.5 L188.0 246.5 L189.5 243.5 Z" fill="#fff" stroke="#e8a860" stroke-width="0.6"/>
<path d="M190.5 243.5 L192.0 246.5 L193.5 243.5 Z" fill="#fff" stroke="#e8a860" stroke-width="0.6"/>
<path d="M194.5 243.5 L196.0 246.5 L197.5 243.5 Z" fill="#fff" stroke="#e8a860" stroke-width="0.6"/>
<path d="M192.0 246.5 L192.0 250.0" fill="none" stroke="#ea6a6a" stroke-width="0.7" />
<path d="M190.6 250 h2.8 l-1.4 5.5 Z" fill="#fff" stroke="#ea6a6a" stroke-width="0.7"/>
<text x="185.0" y="252.2" font-size="4.27" text-anchor="end" fill="#333" font-weight="normal" textLength="35.8" lengthAdjust="spacingAndGlyphs" >L OTR Transfert valve</text>
<path d="M501.5 242.0 L534.6 242.0 L534.6 346.0" fill="none" stroke="#7474dc" stroke-width="1.2" />
<path d="M475.0 246.5 V239.5 L476.7 236.5 L478.4 239.5 V246.5 Z" fill="#fff" stroke="#8484e2" stroke-width="0.8"/>
<path d="M497.6 246.5 V239.5 L499.3 236.5 L501.0 239.5 V246.5 Z" fill="#fff" stroke="#8484e2" stroke-width="0.8"/>
<path d="M478.7 245.0 L497.3 245.0" fill="none" stroke="#e8a860" stroke-width="0.8" />
<path d="M482.5 243.5 L484.0 246.5 L485.5 243.5 Z" fill="#fff" stroke="#e8a860" stroke-width="0.6"/>
<path d="M486.5 243.5 L488.0 246.5 L489.5 243.5 Z" fill="#fff" stroke="#e8a860" stroke-width="0.6"/>
<path d="M490.5 243.5 L492.0 246.5 L493.5 243.5 Z" fill="#fff" stroke="#e8a860" stroke-width="0.6"/>
<path d="M488.0 246.5 L488.0 250.0" fill="none" stroke="#ea6a6a" stroke-width="0.7" />
<path d="M486.6 250 h2.8 l-1.4 5.5 Z" fill="#fff" stroke="#ea6a6a" stroke-width="0.7"/>
<text x="491.7" y="253.0" font-size="4.27" text-anchor="start" fill="#333" font-weight="normal" textLength="36.5" lengthAdjust="spacingAndGlyphs" >R OTR Transfert valve</text>
<path d="M167.0 263.0 L259.0 263.0" fill="none" stroke="#f3caa2" stroke-width="1.3" />
<path d="M167.0 263.0 L167.0 320.0" fill="none" stroke="#c9b060" stroke-width="1.7" />
<path d="M259.0 263.0 L309.5 263.0" fill="none" stroke="#4c54b8" stroke-width="1.6" />
<path d="M309.5 263.0 L370.0 263.0" fill="none" stroke="#f3caa2" stroke-width="1.3" />
<path d="M370.0 263.0 L425.0 263.0" fill="none" stroke="#4c54b8" stroke-width="1.6" />
<path d="M425.0 263.0 L514.0 263.0 L514.0 315.0" fill="none" stroke="#f3caa2" stroke-width="1.3" />
<text x="152.0" y="312.0" font-size="4.27" text-anchor="start" fill="#333" font-weight="normal" textLength="35.8" lengthAdjust="spacingAndGlyphs" >L OTR Transfert valve</text>
<path d="M165.5 325.5 L167.0 322.5 L168.5 325.5 Z" fill="#fff" stroke="#e8a860" stroke-width="0.6"/>
<circle cx="173.5" cy="318.0" r="1.7" fill="#fff" stroke="#ea6a6a" stroke-width="0.7"/>
<path d="M175.2 318.0 L178.0 318.0" fill="none" stroke="#ea6a6a" stroke-width="0.7" />
<path d="M168.5 318.0 L171.8 318.0" fill="none" stroke="#ea6a6a" stroke-width="0.7" />
<path d="M167.0 326.0 L167.0 332.7 L161.5 332.7" fill="none" stroke="#7474dc" stroke-width="1.2" />
<path d="M157.8 335.0 V328.0 L159.5 325.0 L161.2 328.0 V335.0 Z" fill="#fff" stroke="#8484e2" stroke-width="0.8"/>
<path d="M157.5 331.0 L149.0 331.0 L149.0 345.0" fill="none" stroke="#7474dc" stroke-width="1.2" />
<circle cx="152.0" cy="339.0" r="2" fill="#fff" stroke="#7474dc" stroke-width="0.9"/>
<path d="M154.0 339.0 L158.0 339.0" fill="none" stroke="#ea6a6a" stroke-width="0.7" />
<text x="491.0" y="312.3" font-size="4.27" text-anchor="start" fill="#333" font-weight="normal" textLength="36.5" lengthAdjust="spacingAndGlyphs" >R OTR Transfert valve</text>
<path d="M512.5 321.5 L514.0 318.5 L515.5 321.5 Z" fill="#fff" stroke="#e8a860" stroke-width="0.6"/>
<circle cx="506.5" cy="318.0" r="1.7" fill="#fff" stroke="#ea6a6a" stroke-width="0.7"/>
<path d="M502.0 318.0 L504.8 318.0" fill="none" stroke="#ea6a6a" stroke-width="0.7" />
<path d="M508.2 318.0 L512.5 318.0" fill="none" stroke="#ea6a6a" stroke-width="0.7" />
<path d="M514.0 323.0 L514.0 333.8 L518.5 333.8" fill="none" stroke="#7474dc" stroke-width="1.2" />
<path d="M518.3 335.0 V328.0 L520.0 325.0 L521.7 328.0 V335.0 Z" fill="#fff" stroke="#8484e2" stroke-width="0.8"/>
<path d="M522.0 331.0 L532.5 331.0 L532.5 348.0" fill="none" stroke="#7474dc" stroke-width="1.2" />
<circle cx="529.5" cy="339.5" r="2" fill="#fff" stroke="#7474dc" stroke-width="0.9"/>
<path d="M527.5 339.5 L523.5 339.5" fill="none" stroke="#ea6a6a" stroke-width="0.7" />
<path d="M259.0 263.0 L259.0 308.0" fill="none" stroke="#7474dc" stroke-width="1.2" />
<text x="239.0" y="304.0" font-size="4.27" text-anchor="start" fill="#333" font-weight="normal" textLength="34.3" lengthAdjust="spacingAndGlyphs" >L INR Transfert valve</text>
<path d="M257.5 309.0 L259.0 312.0 L260.5 309.0 Z" fill="#fff" stroke="#e8a860" stroke-width="0.6"/>
<path d="M257.5 314.0 L259.0 317.0 L260.5 314.0 Z" fill="#fff" stroke="#e8a860" stroke-width="0.6"/>
<path d="M257.5 322.5 L259.0 319.5 L260.5 322.5 Z" fill="#fff" stroke="#e8a860" stroke-width="0.6"/>
<circle cx="265.2" cy="315.5" r="2.1" fill="#fff" stroke="#ea6a6a" stroke-width="0.7"/>
<path d="M259.0 323.0 L259.0 332.7 L252.0 332.7" fill="none" stroke="#7474dc" stroke-width="1.2" />
<path d="M248.3 335.0 V328.0 L250.0 325.0 L251.7 328.0 V335.0 Z" fill="#fff" stroke="#8484e2" stroke-width="0.8"/>
<path d="M248.0 331.0 L239.3 331.0 L239.3 342.0" fill="none" stroke="#7474dc" stroke-width="1.2" />
<circle cx="243.0" cy="338.3" r="2" fill="#fff" stroke="#7474dc" stroke-width="0.9"/>
<path d="M245.0 338.3 L249.0 338.3" fill="none" stroke="#ea6a6a" stroke-width="0.7" />
<path d="M425.0 263.0 L425.0 308.0" fill="none" stroke="#7474dc" stroke-width="1.2" />
<text x="401.0" y="302.7" font-size="4.27" text-anchor="start" fill="#333" font-weight="normal" textLength="35.1" lengthAdjust="spacingAndGlyphs" >R INR Transfert valve</text>
<path d="M423.5 309.0 L425.0 312.0 L426.5 309.0 Z" fill="#fff" stroke="#e8a860" stroke-width="0.6"/>
<path d="M423.5 314.0 L425.0 317.0 L426.5 314.0 Z" fill="#fff" stroke="#e8a860" stroke-width="0.6"/>
<path d="M423.5 322.5 L425.0 319.5 L426.5 322.5 Z" fill="#fff" stroke="#e8a860" stroke-width="0.6"/>
<circle cx="417.8" cy="315.5" r="2.1" fill="#fff" stroke="#ea6a6a" stroke-width="0.7"/>
<path d="M425.0 323.0 L425.0 335.0 L428.5 335.0" fill="none" stroke="#7474dc" stroke-width="1.2" />
<path d="M428.3 335.0 V328.0 L430.0 325.0 L431.7 328.0 V335.0 Z" fill="#fff" stroke="#8484e2" stroke-width="0.8"/>
<path d="M432.0 331.0 L442.5 331.0 L442.5 342.0" fill="none" stroke="#7474dc" stroke-width="1.2" />
<circle cx="439.5" cy="338.3" r="2" fill="#fff" stroke="#7474dc" stroke-width="0.9"/>
<path d="M437.5 338.3 L433.5 338.3" fill="none" stroke="#ea6a6a" stroke-width="0.7" />
<path d="M309.7 263.0 L309.7 292.5" fill="none" stroke="#7474dc" stroke-width="1.2" />
<path d="M308.2 269.5 L309.7 266.5 L311.2 269.5 Z" fill="#fff" stroke="#e8a860" stroke-width="0.6"/>
<circle cx="315.7" cy="268.0" r="1.7" fill="#fff" stroke="#ea6a6a" stroke-width="0.7"/>
<path d="M311.2 268.0 L314.0 268.0" fill="none" stroke="#ea6a6a" stroke-width="0.7" />
<path d="M317.4 268.0 L320.2 268.0" fill="none" stroke="#ea6a6a" stroke-width="0.7" />
<text x="299.5" y="269.5" font-size="4.27" text-anchor="end" fill="#333" font-weight="normal" textLength="27.0" lengthAdjust="spacingAndGlyphs" >L Transfert valve</text>
<path d="M309.7 288.8 L295.2 288.8 L295.2 348.8 L322.2 348.8" fill="none" stroke="#7474dc" stroke-width="1.2" />
<circle cx="295.2" cy="302.5" r="2.6" fill="#fff" stroke="#e8a860" stroke-width="0.9"/>
<path d="M292.6 301.3 h-4 v2.4 h4 Z" fill="#c9b060" stroke="#c9b060" stroke-width="0.5"/>
<path d="M293.7 297.5 L295.2 294.5 L296.7 297.5 Z" fill="#fff" stroke="#e8a860" stroke-width="0.6"/>
<path d="M293.7 311.5 L295.2 308.5 L296.7 311.5 Z" fill="#fff" stroke="#e8a860" stroke-width="0.6"/>
<circle cx="309.7" cy="302.5" r="2.6" fill="#fff" stroke="#e8a860" stroke-width="0.9"/>
<path d="M308.2 296.0 L309.7 293.0 L311.2 296.0 Z" fill="#fff" stroke="#e8a860" stroke-width="0.6"/>
<path d="M308.2 312.0 L309.7 309.0 L311.2 312.0 Z" fill="#fff" stroke="#e8a860" stroke-width="0.6"/>
<circle cx="317.7" cy="302.5" r="2.6" fill="#fff" stroke="#50b0c8" stroke-width="0.9"/>
<circle cx="317.7" cy="302.5" r="1.2" fill="#fff" stroke="#9ad" stroke-width="0.5"/>
<path d="M320.3 304.5 L327.7 304.5" fill="none" stroke="#ea6a6a" stroke-width="0.8" />
<path d="M327.7 303 v3 l2.5 -1.5 Z" fill="#ea6a6a"/>
<text x="307.0" y="284.7" font-size="4.27" text-anchor="middle" fill="#333" font-weight="normal" textLength="28.0" lengthAdjust="spacingAndGlyphs" >L Transfert Pump</text>
<path d="M309.7 313.0 L309.7 337.5 L322.2 337.5" fill="none" stroke="#7474dc" stroke-width="1.2" />
<path d="M370.2 263.0 L370.2 292.5" fill="none" stroke="#7474dc" stroke-width="1.2" />
<path d="M368.7 269.5 L370.2 266.5 L371.7 269.5 Z" fill="#fff" stroke="#e8a860" stroke-width="0.6"/>
<circle cx="364.2" cy="268.0" r="1.7" fill="#fff" stroke="#ea6a6a" stroke-width="0.7"/>
<path d="M368.7 268.0 L365.9 268.0" fill="none" stroke="#ea6a6a" stroke-width="0.7" />
<path d="M362.5 268.0 L359.7 268.0" fill="none" stroke="#ea6a6a" stroke-width="0.7" />
<text x="375.0" y="269.5" font-size="4.27" text-anchor="start" fill="#333" font-weight="normal" textLength="27.7" lengthAdjust="spacingAndGlyphs" >R Transfert valve</text>
<path d="M370.2 288.8 L384.7 288.8 L384.7 348.8 L357.7 348.8" fill="none" stroke="#7474dc" stroke-width="1.2" />
<circle cx="384.7" cy="302.5" r="2.6" fill="#fff" stroke="#e8a860" stroke-width="0.9"/>
<path d="M387.3 301.3 h4 v2.4 h-4 Z" fill="#c9b060" stroke="#c9b060" stroke-width="0.5"/>
<path d="M383.2 297.5 L384.7 294.5 L386.2 297.5 Z" fill="#fff" stroke="#e8a860" stroke-width="0.6"/>
<path d="M383.2 311.5 L384.7 308.5 L386.2 311.5 Z" fill="#fff" stroke="#e8a860" stroke-width="0.6"/>
<circle cx="370.2" cy="302.5" r="2.6" fill="#fff" stroke="#e8a860" stroke-width="0.9"/>
<path d="M368.7 296.0 L370.2 293.0 L371.7 296.0 Z" fill="#fff" stroke="#e8a860" stroke-width="0.6"/>
<path d="M368.7 312.0 L370.2 309.0 L371.7 312.0 Z" fill="#fff" stroke="#e8a860" stroke-width="0.6"/>
<circle cx="362.2" cy="302.5" r="2.6" fill="#fff" stroke="#50b0c8" stroke-width="0.9"/>
<circle cx="362.2" cy="302.5" r="1.2" fill="#fff" stroke="#9ad" stroke-width="0.5"/>
<path d="M359.6 304.5 L352.2 304.5" fill="none" stroke="#ea6a6a" stroke-width="0.8" />
<path d="M352.2 303 v3 l-2.5 -1.5 Z" fill="#ea6a6a"/>
<text x="366.0" y="284.7" font-size="4.27" text-anchor="middle" fill="#333" font-weight="normal" textLength="28.8" lengthAdjust="spacingAndGlyphs" >R Transfert Pump</text>
<path d="M370.2 313.0 L370.2 337.5 L357.7 337.5" fill="none" stroke="#7474dc" stroke-width="1.2" />
<path d="M321.3 339.0 V332.0 L323.0 329.0 L324.7 332.0 V339.0 Z" fill="#fff" stroke="#8484e2" stroke-width="0.8"/>
<path d="M321.3 351.0 V344.0 L323.0 341.0 L324.7 344.0 V351.0 Z" fill="#fff" stroke="#8484e2" stroke-width="0.8"/>
<path d="M355.3 339.0 V332.0 L357.0 329.0 L358.7 332.0 V339.0 Z" fill="#fff" stroke="#8484e2" stroke-width="0.8"/>
<path d="M355.3 351.0 V344.0 L357.0 341.0 L358.7 344.0 V351.0 Z" fill="#fff" stroke="#8484e2" stroke-width="0.8"/>
<path d="M349.6 337.0 V330.0 L351.3 327.0 L353.0 330.0 V337.0 Z" fill="#fff" stroke="#8484e2" stroke-width="0.8"/>
<path d="M351.3 317.5 L351.3 325.0" fill="none" stroke="#ea6a6a" stroke-width="0.8" />
<path d="M349.9 321 h2.8 l-1.4 -3.5 Z" fill="#ea6a6a"/>
<circle cx="351.3" cy="323.5" r="1.3" fill="#fff" stroke="#ea6a6a" stroke-width="0.6"/>
<path d="M325.0 335.0 L337.5 335.0 L337.5 345.0" fill="none" stroke="#7474dc" stroke-width="1.2" />
<path d="M355.0 335.0 L343.0 335.0 L343.0 345.0" fill="none" stroke="#7474dc" stroke-width="1.2" />
<path d="M325.0 347.0 L336.0 347.0" fill="none" stroke="#7474dc" stroke-width="1.2" />
<path d="M355.0 347.0 L344.5 347.0" fill="none" stroke="#7474dc" stroke-width="1.2" />
<circle cx="334.5" cy="343.6" r="2" fill="#fff" stroke="#7474dc" stroke-width="0.9"/>
<path d="M329.0 343.6 L332.5 343.6" fill="none" stroke="#7474dc" stroke-width="0.8" />
<text x="321.8" y="319.4" font-size="4.07" text-anchor="start" fill="#333" font-weight="normal" textLength="26.1" lengthAdjust="spacingAndGlyphs" >CTR Fuel Height</text>
<path d="M340.2 350.0 L340.2 359.7 L350.3 359.7 L350.3 371.0 L346.5 371.0" fill="none" stroke="#7c7ce0" stroke-width="1.2" />
<path d="M140.5 345.3 L149.5 345.3" fill="none" stroke="#8a8ae0" stroke-width="0.9" />
<path d="M140.0 349.0 L150.0 349.0" fill="none" stroke="#5a5ac8" stroke-width="1.1" />
<path d="M144.5 349.0 L144.5 352.7 L133.0 352.7 L133.0 378.0 L136.5 378.0" fill="none" stroke="#7c7ce0" stroke-width="1.2" />
<path d="M228.0 341.5 L240.0 341.5" fill="none" stroke="#8a8ae0" stroke-width="0.9" />
<path d="M227.5 346.6 L240.5 346.6" fill="none" stroke="#5a5ac8" stroke-width="1.1" />
<path d="M234.0 346.6 L234.0 351.3 L223.0 351.3 L223.0 376.5 L227.0 376.5" fill="none" stroke="#7c7ce0" stroke-width="1.2" />
<path d="M441.5 342.5 L453.0 342.5" fill="none" stroke="#8a8ae0" stroke-width="0.9" />
<path d="M441.0 346.8 L453.5 346.8" fill="none" stroke="#5a5ac8" stroke-width="1.1" />
<path d="M447.5 346.8 L447.5 351.2 L458.0 351.2 L458.0 376.5 L454.5 376.5" fill="none" stroke="#7c7ce0" stroke-width="1.2" />
<path d="M531.0 345.5 L542.5 345.5" fill="none" stroke="#8a8ae0" stroke-width="0.9" />
<path d="M530.5 349.0 L543.0 349.0" fill="none" stroke="#5a5ac8" stroke-width="1.1" />
<path d="M536.0 349.0 L536.0 354.0 L547.0 354.0 L547.0 377.5 L543.5 377.5" fill="none" stroke="#7c7ce0" stroke-width="1.2" />
<rect x="136.6" y="366.0" width="12.4" height="20.0" fill="#fcfcff" stroke="#8888e2" stroke-width="0.8" />
<path d="M136.6 377.0 L149.0 377.0" fill="none" stroke="#a8a8ec" stroke-width="0.6" />
<path d="M136.6 385.5 L149.0 385.5" fill="none" stroke="#8080de" stroke-width="1.3" />
<path d="M141.3 363.5 L141.3 369.0" fill="none" stroke="#7474dc" stroke-width="1.2" />
<path d="M139.0 388.0 L139.0 399.0" fill="none" stroke="#9a9ae8" stroke-width="1.5" />
<path d="M139.0 388.0 L139.0 391.0" fill="none" stroke="#7474dc" stroke-width="0.8" />
<path d="M147.4 388.0 L147.4 399.0" fill="none" stroke="#9a9ae8" stroke-width="1.5" />
<path d="M147.4 388.0 L147.4 391.0" fill="none" stroke="#7474dc" stroke-width="0.8" />
<path d="M149.0 370.5 L152.5 370.5" fill="none" stroke="#f08c8c" stroke-width="0.7" />
<path d="M149.0 376.0 L152.5 376.0" fill="none" stroke="#f08c8c" stroke-width="0.7" />
<path d="M149.0 381.5 L152.5 381.5" fill="none" stroke="#f08c8c" stroke-width="0.7" />
<path d="M162.0 360.0 L167.5 360.0" fill="none" stroke="#f08c8c" stroke-width="0.7" stroke-dasharray="1.2 0.8" />
<path d="M162.0 363.3 L167.5 363.3" fill="none" stroke="#f08c8c" stroke-width="0.7" stroke-dasharray="1.2 0.8" />
<path d="M162.0 366.6 L167.5 366.6" fill="none" stroke="#f08c8c" stroke-width="0.7" stroke-dasharray="1.2 0.8" />
<path d="M162.0 369.9 L167.5 369.9" fill="none" stroke="#f08c8c" stroke-width="0.7" stroke-dasharray="1.2 0.8" />
<path d="M162.0 373.2 L167.5 373.2" fill="none" stroke="#f08c8c" stroke-width="0.7" stroke-dasharray="1.2 0.8" />
<path d="M162.0 376.5 L167.5 376.5" fill="none" stroke="#f08c8c" stroke-width="0.7" stroke-dasharray="1.2 0.8" />
<path d="M162.0 379.8 L167.5 379.8" fill="none" stroke="#f08c8c" stroke-width="0.7" stroke-dasharray="1.2 0.8" />
<path d="M162.0 360.0 L162.0 380.0" fill="none" stroke="#f08c8c" stroke-width="0.6" stroke-dasharray="1.5 1" />
<path d="M167.5 360.0 L167.5 380.0" fill="none" stroke="#f08c8c" stroke-width="0.6" stroke-dasharray="1.5 1" />
<path d="M152.5 370.5 L162.0 370.5" fill="none" stroke="#ea6a6a" stroke-width="0.8" stroke-dasharray="2.2 1.4" />
<rect x="227.0" y="365.0" width="12.4" height="20.0" fill="#fcfcff" stroke="#8888e2" stroke-width="0.8" />
<path d="M227.0 376.0 L239.4 376.0" fill="none" stroke="#a8a8ec" stroke-width="0.6" />
<path d="M227.0 384.5 L239.4 384.5" fill="none" stroke="#8080de" stroke-width="1.3" />
<path d="M231.7 362.5 L231.7 368.0" fill="none" stroke="#7474dc" stroke-width="1.2" />
<path d="M229.4 387.0 L229.4 398.0" fill="none" stroke="#9a9ae8" stroke-width="1.5" />
<path d="M229.4 387.0 L229.4 390.0" fill="none" stroke="#7474dc" stroke-width="0.8" />
<path d="M237.8 387.0 L237.8 398.0" fill="none" stroke="#9a9ae8" stroke-width="1.5" />
<path d="M237.8 387.0 L237.8 390.0" fill="none" stroke="#7474dc" stroke-width="0.8" />
<path d="M239.4 369.5 L242.9 369.5" fill="none" stroke="#f08c8c" stroke-width="0.7" />
<path d="M239.4 375.0 L242.9 375.0" fill="none" stroke="#f08c8c" stroke-width="0.7" />
<path d="M239.4 380.5 L242.9 380.5" fill="none" stroke="#f08c8c" stroke-width="0.7" />
<path d="M252.4 359.0 L257.9 359.0" fill="none" stroke="#f08c8c" stroke-width="0.7" stroke-dasharray="1.2 0.8" />
<path d="M252.4 362.3 L257.9 362.3" fill="none" stroke="#f08c8c" stroke-width="0.7" stroke-dasharray="1.2 0.8" />
<path d="M252.4 365.6 L257.9 365.6" fill="none" stroke="#f08c8c" stroke-width="0.7" stroke-dasharray="1.2 0.8" />
<path d="M252.4 368.9 L257.9 368.9" fill="none" stroke="#f08c8c" stroke-width="0.7" stroke-dasharray="1.2 0.8" />
<path d="M252.4 372.2 L257.9 372.2" fill="none" stroke="#f08c8c" stroke-width="0.7" stroke-dasharray="1.2 0.8" />
<path d="M252.4 375.5 L257.9 375.5" fill="none" stroke="#f08c8c" stroke-width="0.7" stroke-dasharray="1.2 0.8" />
<path d="M252.4 378.8 L257.9 378.8" fill="none" stroke="#f08c8c" stroke-width="0.7" stroke-dasharray="1.2 0.8" />
<path d="M252.4 359.0 L252.4 379.0" fill="none" stroke="#f08c8c" stroke-width="0.6" stroke-dasharray="1.5 1" />
<path d="M257.9 359.0 L257.9 379.0" fill="none" stroke="#f08c8c" stroke-width="0.6" stroke-dasharray="1.5 1" />
<path d="M242.9 369.5 L252.4 369.5" fill="none" stroke="#ea6a6a" stroke-width="0.8" stroke-dasharray="2.2 1.4" />
<rect x="334.0" y="365.5" width="12.4" height="20.0" fill="#fcfcff" stroke="#8888e2" stroke-width="0.8" />
<path d="M334.0 376.5 L346.4 376.5" fill="none" stroke="#a8a8ec" stroke-width="0.6" />
<path d="M334.0 385.0 L346.4 385.0" fill="none" stroke="#8080de" stroke-width="1.3" />
<path d="M338.7 363.0 L338.7 368.5" fill="none" stroke="#7474dc" stroke-width="1.2" />
<path d="M336.4 387.5 L336.4 398.5" fill="none" stroke="#9a9ae8" stroke-width="1.5" />
<path d="M336.4 387.5 L336.4 390.5" fill="none" stroke="#7474dc" stroke-width="0.8" />
<path d="M344.8 387.5 L344.8 398.5" fill="none" stroke="#9a9ae8" stroke-width="1.5" />
<path d="M344.8 387.5 L344.8 390.5" fill="none" stroke="#7474dc" stroke-width="0.8" />
<path d="M334.0 370.0 L330.5 370.0" fill="none" stroke="#f08c8c" stroke-width="0.7" />
<path d="M334.0 375.5 L330.5 375.5" fill="none" stroke="#f08c8c" stroke-width="0.7" />
<path d="M334.0 381.0 L330.5 381.0" fill="none" stroke="#f08c8c" stroke-width="0.7" />
<path d="M321.0 359.5 L315.5 359.5" fill="none" stroke="#f08c8c" stroke-width="0.7" stroke-dasharray="1.2 0.8" />
<path d="M321.0 362.8 L315.5 362.8" fill="none" stroke="#f08c8c" stroke-width="0.7" stroke-dasharray="1.2 0.8" />
<path d="M321.0 366.1 L315.5 366.1" fill="none" stroke="#f08c8c" stroke-width="0.7" stroke-dasharray="1.2 0.8" />
<path d="M321.0 369.4 L315.5 369.4" fill="none" stroke="#f08c8c" stroke-width="0.7" stroke-dasharray="1.2 0.8" />
<path d="M321.0 372.7 L315.5 372.7" fill="none" stroke="#f08c8c" stroke-width="0.7" stroke-dasharray="1.2 0.8" />
<path d="M321.0 376.0 L315.5 376.0" fill="none" stroke="#f08c8c" stroke-width="0.7" stroke-dasharray="1.2 0.8" />
<path d="M321.0 379.3 L315.5 379.3" fill="none" stroke="#f08c8c" stroke-width="0.7" stroke-dasharray="1.2 0.8" />
<path d="M321.0 359.5 L321.0 379.5" fill="none" stroke="#f08c8c" stroke-width="0.6" stroke-dasharray="1.5 1" />
<path d="M315.5 359.5 L315.5 379.5" fill="none" stroke="#f08c8c" stroke-width="0.6" stroke-dasharray="1.5 1" />
<path d="M330.5 370.0 L321.0 370.0" fill="none" stroke="#ea6a6a" stroke-width="0.8" stroke-dasharray="2.2 1.4" />
<rect x="442.1" y="365.0" width="12.4" height="20.0" fill="#fcfcff" stroke="#8888e2" stroke-width="0.8" />
<path d="M442.1 376.0 L454.5 376.0" fill="none" stroke="#a8a8ec" stroke-width="0.6" />
<path d="M442.1 384.5 L454.5 384.5" fill="none" stroke="#8080de" stroke-width="1.3" />
<path d="M446.8 362.5 L446.8 368.0" fill="none" stroke="#7474dc" stroke-width="1.2" />
<path d="M444.5 387.0 L444.5 398.0" fill="none" stroke="#9a9ae8" stroke-width="1.5" />
<path d="M444.5 387.0 L444.5 390.0" fill="none" stroke="#7474dc" stroke-width="0.8" />
<path d="M452.9 387.0 L452.9 398.0" fill="none" stroke="#9a9ae8" stroke-width="1.5" />
<path d="M452.9 387.0 L452.9 390.0" fill="none" stroke="#7474dc" stroke-width="0.8" />
<path d="M442.1 369.5 L438.6 369.5" fill="none" stroke="#f08c8c" stroke-width="0.7" />
<path d="M442.1 375.0 L438.6 375.0" fill="none" stroke="#f08c8c" stroke-width="0.7" />
<path d="M442.1 380.5 L438.6 380.5" fill="none" stroke="#f08c8c" stroke-width="0.7" />
<path d="M429.1 359.0 L423.6 359.0" fill="none" stroke="#f08c8c" stroke-width="0.7" stroke-dasharray="1.2 0.8" />
<path d="M429.1 362.3 L423.6 362.3" fill="none" stroke="#f08c8c" stroke-width="0.7" stroke-dasharray="1.2 0.8" />
<path d="M429.1 365.6 L423.6 365.6" fill="none" stroke="#f08c8c" stroke-width="0.7" stroke-dasharray="1.2 0.8" />
<path d="M429.1 368.9 L423.6 368.9" fill="none" stroke="#f08c8c" stroke-width="0.7" stroke-dasharray="1.2 0.8" />
<path d="M429.1 372.2 L423.6 372.2" fill="none" stroke="#f08c8c" stroke-width="0.7" stroke-dasharray="1.2 0.8" />
<path d="M429.1 375.5 L423.6 375.5" fill="none" stroke="#f08c8c" stroke-width="0.7" stroke-dasharray="1.2 0.8" />
<path d="M429.1 378.8 L423.6 378.8" fill="none" stroke="#f08c8c" stroke-width="0.7" stroke-dasharray="1.2 0.8" />
<path d="M429.1 359.0 L429.1 379.0" fill="none" stroke="#f08c8c" stroke-width="0.6" stroke-dasharray="1.5 1" />
<path d="M423.6 359.0 L423.6 379.0" fill="none" stroke="#f08c8c" stroke-width="0.6" stroke-dasharray="1.5 1" />
<path d="M438.6 369.5 L429.1 369.5" fill="none" stroke="#ea6a6a" stroke-width="0.8" stroke-dasharray="2.2 1.4" />
<rect x="531.3" y="366.5" width="12.4" height="20.0" fill="#fcfcff" stroke="#8888e2" stroke-width="0.8" />
<path d="M531.3 377.5 L543.7 377.5" fill="none" stroke="#a8a8ec" stroke-width="0.6" />
<path d="M531.3 386.0 L543.7 386.0" fill="none" stroke="#8080de" stroke-width="1.3" />
<path d="M536.0 364.0 L536.0 369.5" fill="none" stroke="#7474dc" stroke-width="1.2" />
<path d="M533.7 388.5 L533.7 399.5" fill="none" stroke="#9a9ae8" stroke-width="1.5" />
<path d="M533.7 388.5 L533.7 391.5" fill="none" stroke="#7474dc" stroke-width="0.8" />
<path d="M542.1 388.5 L542.1 399.5" fill="none" stroke="#9a9ae8" stroke-width="1.5" />
<path d="M542.1 388.5 L542.1 391.5" fill="none" stroke="#7474dc" stroke-width="0.8" />
<path d="M531.3 371.0 L527.8 371.0" fill="none" stroke="#f08c8c" stroke-width="0.7" />
<path d="M531.3 376.5 L527.8 376.5" fill="none" stroke="#f08c8c" stroke-width="0.7" />
<path d="M531.3 382.0 L527.8 382.0" fill="none" stroke="#f08c8c" stroke-width="0.7" />
<path d="M518.3 360.5 L512.8 360.5" fill="none" stroke="#f08c8c" stroke-width="0.7" stroke-dasharray="1.2 0.8" />
<path d="M518.3 363.8 L512.8 363.8" fill="none" stroke="#f08c8c" stroke-width="0.7" stroke-dasharray="1.2 0.8" />
<path d="M518.3 367.1 L512.8 367.1" fill="none" stroke="#f08c8c" stroke-width="0.7" stroke-dasharray="1.2 0.8" />
<path d="M518.3 370.4 L512.8 370.4" fill="none" stroke="#f08c8c" stroke-width="0.7" stroke-dasharray="1.2 0.8" />
<path d="M518.3 373.7 L512.8 373.7" fill="none" stroke="#f08c8c" stroke-width="0.7" stroke-dasharray="1.2 0.8" />
<path d="M518.3 377.0 L512.8 377.0" fill="none" stroke="#f08c8c" stroke-width="0.7" stroke-dasharray="1.2 0.8" />
<path d="M518.3 380.3 L512.8 380.3" fill="none" stroke="#f08c8c" stroke-width="0.7" stroke-dasharray="1.2 0.8" />
<path d="M518.3 360.5 L518.3 380.5" fill="none" stroke="#f08c8c" stroke-width="0.6" stroke-dasharray="1.5 1" />
<path d="M512.8 360.5 L512.8 380.5" fill="none" stroke="#f08c8c" stroke-width="0.6" stroke-dasharray="1.5 1" />
<path d="M527.8 371.0 L518.3 371.0" fill="none" stroke="#ea6a6a" stroke-width="0.8" stroke-dasharray="2.2 1.4" />
<text x="125.0" y="375.4" font-size="4.46" text-anchor="end" fill="#333" font-weight="normal" textLength="11.2" lengthAdjust="spacingAndGlyphs" >L OTR</text>
<text x="125.0" y="384.0" font-size="4.17" text-anchor="end" fill="#333" font-weight="normal" textLength="27.2" lengthAdjust="spacingAndGlyphs" >V max = 3.72 m3</text>
<text x="216.0" y="373.6" font-size="4.46" text-anchor="end" fill="#333" font-weight="normal" textLength="9.7" lengthAdjust="spacingAndGlyphs" >L INR</text>
<text x="217.0" y="382.5" font-size="4.17" text-anchor="end" fill="#333" font-weight="normal" textLength="29.2" lengthAdjust="spacingAndGlyphs" >V max = 44.69 m3</text>
<text x="353.0" y="372.1" font-size="4.46" text-anchor="start" fill="#333" font-weight="normal" textLength="7.9" lengthAdjust="spacingAndGlyphs" >CTR</text>
<text x="353.0" y="380.3" font-size="4.17" text-anchor="start" fill="#333" font-weight="normal" textLength="29.2" lengthAdjust="spacingAndGlyphs" >V max = 42.43 m3</text>
<text x="461.0" y="371.9" font-size="4.46" text-anchor="start" fill="#333" font-weight="normal" textLength="10.4" lengthAdjust="spacingAndGlyphs" >R INR</text>
<text x="461.0" y="381.5" font-size="4.17" text-anchor="start" fill="#333" font-weight="normal" textLength="29.2" lengthAdjust="spacingAndGlyphs" >V max = 44.69 m3</text>
<text x="550.0" y="372.6" font-size="4.46" text-anchor="start" fill="#333" font-weight="normal" textLength="11.9" lengthAdjust="spacingAndGlyphs" >R OTR</text>
<text x="550.0" y="381.0" font-size="4.17" text-anchor="start" fill="#333" font-weight="normal" textLength="27.2" lengthAdjust="spacingAndGlyphs" >V max = 3.72 m3</text>
<path d="M142.3 388.0 L142.3 421.0 L147.0 421.0" fill="none" stroke="#ea6a6a" stroke-width="0.8" stroke-dasharray="2.2 1.4" />
<rect x="147.0" y="410.0" width="10.0" height="5.0" fill="#f6f6ff" stroke="#9a9ae8" stroke-width="0.8" />
<path d="M148.5 414.0 l2.5 -3 l2 2 l2.5 -2" fill="none" stroke="#9a9ae8" stroke-width="0.6"/>
<rect x="147.0" y="424.0" width="10.0" height="5.0" fill="#f6f6ff" stroke="#9a9ae8" stroke-width="0.8" />
<path d="M148.5 428.0 l2.5 -3 l2 2 l2.5 -2" fill="none" stroke="#9a9ae8" stroke-width="0.6"/>
<path d="M158.0 406.0 L162.0 406.0" fill="none" stroke="#f08c8c" stroke-width="0.7" stroke-dasharray="1.3 0.8" />
<path d="M158.0 409.3 L162.0 409.3" fill="none" stroke="#f08c8c" stroke-width="0.7" stroke-dasharray="1.3 0.8" />
<path d="M158.0 412.6 L162.0 412.6" fill="none" stroke="#f08c8c" stroke-width="0.7" stroke-dasharray="1.3 0.8" />
<path d="M158.0 415.9 L162.0 415.9" fill="none" stroke="#f08c8c" stroke-width="0.7" stroke-dasharray="1.3 0.8" />
<path d="M158.0 419.2 L162.0 419.2" fill="none" stroke="#f08c8c" stroke-width="0.7" stroke-dasharray="1.3 0.8" />
<path d="M158.0 422.5 L162.0 422.5" fill="none" stroke="#f08c8c" stroke-width="0.7" stroke-dasharray="1.3 0.8" />
<path d="M158.0 425.8 L162.0 425.8" fill="none" stroke="#f08c8c" stroke-width="0.7" stroke-dasharray="1.3 0.8" />
<path d="M158.0 429.1 L162.0 429.1" fill="none" stroke="#f08c8c" stroke-width="0.7" stroke-dasharray="1.3 0.8" />
<path d="M162.0 406.0 L162.0 430.0" fill="none" stroke="#f08c8c" stroke-width="0.6" stroke-dasharray="1.5 1" />
<path d="M162.5 421.0 L184.0 421.0 L184.0 473.0 L375.0 473.0" fill="none" stroke="#ea6a6a" stroke-width="0.8" stroke-dasharray="2.2 1.4" />
<path d="M147.0 430.5 L184.0 430.5" fill="none" stroke="#ea6a6a" stroke-width="0.8" stroke-dasharray="2.2 1.4" />
<path d="M178.0 430.5 L178.0 434.5" fill="none" stroke="#ea6a6a" stroke-width="0.8" />
<ellipse cx="178.0" cy="437.0" rx="1.5" ry="2.6" fill="#fff" stroke="#ea6a6a" stroke-width="0.7"/>
<path d="M176.4 439.8 L179.6 439.8 L178.0 442.8 Z" fill="#ea6a6a"/>
<text x="162.0" y="450.3" font-size="4.27" text-anchor="middle" fill="#333" font-weight="normal" textLength="28.6" lengthAdjust="spacingAndGlyphs" >L OTR Fuel Mass</text>
<path d="M233.3 388.0 L233.3 422.0 L239.0 422.0" fill="none" stroke="#ea6a6a" stroke-width="0.8" stroke-dasharray="2.2 1.4" />
<rect x="239.0" y="411.5" width="10.0" height="5.0" fill="#f6f6ff" stroke="#9a9ae8" stroke-width="0.8" />
<path d="M240.5 415.5 l2.5 -3 l2 2 l2.5 -2" fill="none" stroke="#9a9ae8" stroke-width="0.6"/>
<rect x="239.0" y="425.5" width="10.0" height="5.0" fill="#f6f6ff" stroke="#9a9ae8" stroke-width="0.8" />
<path d="M240.5 429.5 l2.5 -3 l2 2 l2.5 -2" fill="none" stroke="#9a9ae8" stroke-width="0.6"/>
<path d="M250.0 407.5 L254.0 407.5" fill="none" stroke="#f08c8c" stroke-width="0.7" stroke-dasharray="1.3 0.8" />
<path d="M250.0 410.8 L254.0 410.8" fill="none" stroke="#f08c8c" stroke-width="0.7" stroke-dasharray="1.3 0.8" />
<path d="M250.0 414.1 L254.0 414.1" fill="none" stroke="#f08c8c" stroke-width="0.7" stroke-dasharray="1.3 0.8" />
<path d="M250.0 417.4 L254.0 417.4" fill="none" stroke="#f08c8c" stroke-width="0.7" stroke-dasharray="1.3 0.8" />
<path d="M250.0 420.7 L254.0 420.7" fill="none" stroke="#f08c8c" stroke-width="0.7" stroke-dasharray="1.3 0.8" />
<path d="M250.0 424.0 L254.0 424.0" fill="none" stroke="#f08c8c" stroke-width="0.7" stroke-dasharray="1.3 0.8" />
<path d="M250.0 427.3 L254.0 427.3" fill="none" stroke="#f08c8c" stroke-width="0.7" stroke-dasharray="1.3 0.8" />
<path d="M250.0 430.6 L254.0 430.6" fill="none" stroke="#f08c8c" stroke-width="0.7" stroke-dasharray="1.3 0.8" />
<path d="M254.0 407.5 L254.0 431.5" fill="none" stroke="#f08c8c" stroke-width="0.6" stroke-dasharray="1.5 1" />
<path d="M254.0 422.0 L271.0 422.0 L271.0 469.8 L380.0 469.8" fill="none" stroke="#ea6a6a" stroke-width="0.8" stroke-dasharray="2.2 1.4" />
<path d="M239.0 432.0 L271.0 432.0" fill="none" stroke="#ea6a6a" stroke-width="0.8" stroke-dasharray="2.2 1.4" />
<path d="M264.5 432.0 L264.5 436.0" fill="none" stroke="#ea6a6a" stroke-width="0.8" />
<ellipse cx="264.5" cy="438.5" rx="1.5" ry="2.6" fill="#fff" stroke="#ea6a6a" stroke-width="0.7"/>
<path d="M262.9 441.3 L266.1 441.3 L264.5 444.3 Z" fill="#ea6a6a"/>
<text x="249.0" y="450.5" font-size="4.27" text-anchor="middle" fill="#333" font-weight="normal" textLength="27.2" lengthAdjust="spacingAndGlyphs" >L INR Fuel mass</text>
<path d="M340.5 388.0 L340.5 420.3 L346.0 420.3" fill="none" stroke="#ea6a6a" stroke-width="0.8" stroke-dasharray="2.2 1.4" />
<rect x="346.0" y="410.3" width="10.0" height="5.0" fill="#f6f6ff" stroke="#9a9ae8" stroke-width="0.8" />
<path d="M347.5 414.3 l2.5 -3 l2 2 l2.5 -2" fill="none" stroke="#9a9ae8" stroke-width="0.6"/>
<rect x="346.0" y="424.3" width="10.0" height="5.0" fill="#f6f6ff" stroke="#9a9ae8" stroke-width="0.8" />
<path d="M347.5 428.3 l2.5 -3 l2 2 l2.5 -2" fill="none" stroke="#9a9ae8" stroke-width="0.6"/>
<path d="M357.0 406.3 L361.0 406.3" fill="none" stroke="#f08c8c" stroke-width="0.7" stroke-dasharray="1.3 0.8" />
<path d="M357.0 409.6 L361.0 409.6" fill="none" stroke="#f08c8c" stroke-width="0.7" stroke-dasharray="1.3 0.8" />
<path d="M357.0 412.9 L361.0 412.9" fill="none" stroke="#f08c8c" stroke-width="0.7" stroke-dasharray="1.3 0.8" />
<path d="M357.0 416.2 L361.0 416.2" fill="none" stroke="#f08c8c" stroke-width="0.7" stroke-dasharray="1.3 0.8" />
<path d="M357.0 419.5 L361.0 419.5" fill="none" stroke="#f08c8c" stroke-width="0.7" stroke-dasharray="1.3 0.8" />
<path d="M357.0 422.8 L361.0 422.8" fill="none" stroke="#f08c8c" stroke-width="0.7" stroke-dasharray="1.3 0.8" />
<path d="M357.0 426.1 L361.0 426.1" fill="none" stroke="#f08c8c" stroke-width="0.7" stroke-dasharray="1.3 0.8" />
<path d="M357.0 429.4 L361.0 429.4" fill="none" stroke="#f08c8c" stroke-width="0.7" stroke-dasharray="1.3 0.8" />
<path d="M361.0 406.3 L361.0 430.3" fill="none" stroke="#f08c8c" stroke-width="0.6" stroke-dasharray="1.5 1" />
<path d="M361.5 420.3 L380.5 420.3 L380.5 484.0" fill="none" stroke="#ea6a6a" stroke-width="0.8" stroke-dasharray="2.2 1.4" />
<path d="M346.0 430.5 L380.5 430.5" fill="none" stroke="#ea6a6a" stroke-width="0.8" stroke-dasharray="2.2 1.4" />
<path d="M370.5 430.5 L370.5 434.5" fill="none" stroke="#ea6a6a" stroke-width="0.8" />
<ellipse cx="370.5" cy="437.0" rx="1.5" ry="2.6" fill="#fff" stroke="#ea6a6a" stroke-width="0.7"/>
<path d="M368.9 439.8 L372.1 439.8 L370.5 442.8 Z" fill="#ea6a6a"/>
<text x="361.5" y="450.5" font-size="4.27" text-anchor="middle" fill="#333" font-weight="normal" textLength="25.5" lengthAdjust="spacingAndGlyphs" >CTR Fuel Mass</text>
<path d="M448.8 388.0 L448.8 422.0 L455.0 422.0" fill="none" stroke="#ea6a6a" stroke-width="0.8" stroke-dasharray="2.2 1.4" />
<rect x="455.0" y="411.5" width="10.0" height="5.0" fill="#f6f6ff" stroke="#9a9ae8" stroke-width="0.8" />
<path d="M456.5 415.5 l2.5 -3 l2 2 l2.5 -2" fill="none" stroke="#9a9ae8" stroke-width="0.6"/>
<rect x="455.0" y="425.5" width="10.0" height="5.0" fill="#f6f6ff" stroke="#9a9ae8" stroke-width="0.8" />
<path d="M456.5 429.5 l2.5 -3 l2 2 l2.5 -2" fill="none" stroke="#9a9ae8" stroke-width="0.6"/>
<path d="M466.0 407.5 L470.0 407.5" fill="none" stroke="#f08c8c" stroke-width="0.7" stroke-dasharray="1.3 0.8" />
<path d="M466.0 410.8 L470.0 410.8" fill="none" stroke="#f08c8c" stroke-width="0.7" stroke-dasharray="1.3 0.8" />
<path d="M466.0 414.1 L470.0 414.1" fill="none" stroke="#f08c8c" stroke-width="0.7" stroke-dasharray="1.3 0.8" />
<path d="M466.0 417.4 L470.0 417.4" fill="none" stroke="#f08c8c" stroke-width="0.7" stroke-dasharray="1.3 0.8" />
<path d="M466.0 420.7 L470.0 420.7" fill="none" stroke="#f08c8c" stroke-width="0.7" stroke-dasharray="1.3 0.8" />
<path d="M466.0 424.0 L470.0 424.0" fill="none" stroke="#f08c8c" stroke-width="0.7" stroke-dasharray="1.3 0.8" />
<path d="M466.0 427.3 L470.0 427.3" fill="none" stroke="#f08c8c" stroke-width="0.7" stroke-dasharray="1.3 0.8" />
<path d="M466.0 430.6 L470.0 430.6" fill="none" stroke="#f08c8c" stroke-width="0.7" stroke-dasharray="1.3 0.8" />
<path d="M470.0 407.5 L470.0 431.5" fill="none" stroke="#f08c8c" stroke-width="0.6" stroke-dasharray="1.5 1" />
<path d="M470.0 422.0 L490.3 422.0 L490.3 462.4 L382.0 462.4" fill="none" stroke="#ea6a6a" stroke-width="0.8" stroke-dasharray="2.2 1.4" />
<path d="M455.0 432.0 L490.3 432.0" fill="none" stroke="#ea6a6a" stroke-width="0.8" stroke-dasharray="2.2 1.4" />
<path d="M477.0 432.0 L477.0 436.0" fill="none" stroke="#ea6a6a" stroke-width="0.8" />
<ellipse cx="477.0" cy="438.5" rx="1.5" ry="2.6" fill="#fff" stroke="#ea6a6a" stroke-width="0.7"/>
<path d="M475.4 441.3 L478.6 441.3 L477.0 444.3 Z" fill="#ea6a6a"/>
<text x="468.5" y="451.5" font-size="4.27" text-anchor="middle" fill="#333" font-weight="normal" textLength="27.9" lengthAdjust="spacingAndGlyphs" >R INR Fuel Mass</text>
<path d="M537.8 388.0 L537.8 424.0 L544.0 424.0" fill="none" stroke="#ea6a6a" stroke-width="0.8" stroke-dasharray="2.2 1.4" />
<rect x="544.0" y="413.5" width="10.0" height="5.0" fill="#f6f6ff" stroke="#9a9ae8" stroke-width="0.8" />
<path d="M545.5 417.5 l2.5 -3 l2 2 l2.5 -2" fill="none" stroke="#9a9ae8" stroke-width="0.6"/>
<rect x="544.0" y="427.5" width="10.0" height="5.0" fill="#f6f6ff" stroke="#9a9ae8" stroke-width="0.8" />
<path d="M545.5 431.5 l2.5 -3 l2 2 l2.5 -2" fill="none" stroke="#9a9ae8" stroke-width="0.6"/>
<path d="M555.0 409.5 L559.0 409.5" fill="none" stroke="#f08c8c" stroke-width="0.7" stroke-dasharray="1.3 0.8" />
<path d="M555.0 412.8 L559.0 412.8" fill="none" stroke="#f08c8c" stroke-width="0.7" stroke-dasharray="1.3 0.8" />
<path d="M555.0 416.1 L559.0 416.1" fill="none" stroke="#f08c8c" stroke-width="0.7" stroke-dasharray="1.3 0.8" />
<path d="M555.0 419.4 L559.0 419.4" fill="none" stroke="#f08c8c" stroke-width="0.7" stroke-dasharray="1.3 0.8" />
<path d="M555.0 422.7 L559.0 422.7" fill="none" stroke="#f08c8c" stroke-width="0.7" stroke-dasharray="1.3 0.8" />
<path d="M555.0 426.0 L559.0 426.0" fill="none" stroke="#f08c8c" stroke-width="0.7" stroke-dasharray="1.3 0.8" />
<path d="M555.0 429.3 L559.0 429.3" fill="none" stroke="#f08c8c" stroke-width="0.7" stroke-dasharray="1.3 0.8" />
<path d="M555.0 432.6 L559.0 432.6" fill="none" stroke="#f08c8c" stroke-width="0.7" stroke-dasharray="1.3 0.8" />
<path d="M559.0 409.5 L559.0 433.5" fill="none" stroke="#f08c8c" stroke-width="0.6" stroke-dasharray="1.5 1" />
<path d="M559.0 424.0 L578.3 424.0 L578.3 470.0 L383.5 470.0" fill="none" stroke="#ea6a6a" stroke-width="0.8" stroke-dasharray="2.2 1.4" />
<path d="M544.0 434.5 L578.3 434.5" fill="none" stroke="#ea6a6a" stroke-width="0.8" stroke-dasharray="2.2 1.4" />
<path d="M566.6 434.5 L566.6 438.5" fill="none" stroke="#ea6a6a" stroke-width="0.8" />
<ellipse cx="566.6" cy="441.0" rx="1.5" ry="2.6" fill="#fff" stroke="#ea6a6a" stroke-width="0.7"/>
<path d="M565.0 443.8 L568.2 443.8 L566.6 446.8 Z" fill="#ea6a6a"/>
<text x="557.0" y="453.5" font-size="4.27" text-anchor="middle" fill="#333" font-weight="normal" textLength="29.4" lengthAdjust="spacingAndGlyphs" >R OTR Fuel Mass</text>
<rect x="283.7" y="458.8" width="158.8" height="66.2" fill="none" stroke="#c8c8c8" stroke-width="0.9" />
<path d="M375.5 464.0 L375.5 484.0" fill="none" stroke="#ea6a6a" stroke-width="0.8" stroke-dasharray="2.2 1.4" />
<path d="M378.0 464.0 L378.0 484.0" fill="none" stroke="#ea6a6a" stroke-width="0.8" stroke-dasharray="2.2 1.4" />
<path d="M383.0 464.0 L383.0 484.0" fill="none" stroke="#ea6a6a" stroke-width="0.8" stroke-dasharray="2.2 1.4" />
<text x="319.0" y="491.5" font-size="4.27" text-anchor="end" fill="#333" font-weight="normal" textLength="28.6" lengthAdjust="spacingAndGlyphs" >L OTR Fuel Mass</text>
<circle cx="331.0" cy="492.3" r="1.6" fill="#fff" stroke="#ea6a6a" stroke-width="0.7"/>
<path d="M327.8 492.3 l1.8 -1.2 v2.4 Z" fill="#ea6a6a"/>
<path d="M332.6 492.3 L343.5 492.3" fill="none" stroke="#ea6a6a" stroke-width="0.8" stroke-dasharray="2.2 1.4" />
<text x="319.0" y="498.3" font-size="4.27" text-anchor="end" fill="#333" font-weight="normal" textLength="27.2" lengthAdjust="spacingAndGlyphs" >L INR Fuel Mass</text>
<circle cx="331.0" cy="499.1" r="1.6" fill="#fff" stroke="#ea6a6a" stroke-width="0.7"/>
<path d="M327.8 499.1 l1.8 -1.2 v2.4 Z" fill="#ea6a6a"/>
<path d="M332.6 499.1 L343.5 499.1" fill="none" stroke="#ea6a6a" stroke-width="0.8" stroke-dasharray="2.2 1.4" />
<text x="319.0" y="505.3" font-size="4.27" text-anchor="end" fill="#333" font-weight="normal" textLength="25.5" lengthAdjust="spacingAndGlyphs" >CTR Fuel Mass</text>
<circle cx="331.0" cy="506.1" r="1.6" fill="#fff" stroke="#ea6a6a" stroke-width="0.7"/>
<path d="M327.8 506.1 l1.8 -1.2 v2.4 Z" fill="#ea6a6a"/>
<path d="M332.6 506.1 L343.5 506.1" fill="none" stroke="#ea6a6a" stroke-width="0.8" stroke-dasharray="2.2 1.4" />
<text x="319.0" y="512.3" font-size="4.27" text-anchor="end" fill="#333" font-weight="normal" textLength="27.9" lengthAdjust="spacingAndGlyphs" >R INR Fuel Mass</text>
<circle cx="331.0" cy="513.1" r="1.6" fill="#fff" stroke="#ea6a6a" stroke-width="0.7"/>
<path d="M327.8 513.1 l1.8 -1.2 v2.4 Z" fill="#ea6a6a"/>
<path d="M332.6 513.1 L343.5 513.1" fill="none" stroke="#ea6a6a" stroke-width="0.8" stroke-dasharray="2.2 1.4" />
<text x="319.0" y="519.0" font-size="4.27" text-anchor="end" fill="#333" font-weight="normal" textLength="29.4" lengthAdjust="spacingAndGlyphs" >R OTR Fuel Mass</text>
<circle cx="331.0" cy="519.8" r="1.6" fill="#fff" stroke="#ea6a6a" stroke-width="0.7"/>
<path d="M327.8 519.8 l1.8 -1.2 v2.4 Z" fill="#ea6a6a"/>
<path d="M332.6 519.8 L343.5 519.8" fill="none" stroke="#ea6a6a" stroke-width="0.8" stroke-dasharray="2.2 1.4" />
<path d="M343.5 492.3 L343.5 499.5 L346.0 501.0" fill="none" stroke="#ea6a6a" stroke-width="0.7" stroke-dasharray="2.2 1.4" />
<path d="M343.5 519.8 L343.5 510.0 L346.0 508.5" fill="none" stroke="#ea6a6a" stroke-width="0.7" stroke-dasharray="2.2 1.4" />
<path d="M346 499 l8.5 1.8 v8 l-8.5 1.8 Z" fill="#fff" stroke="#ea6a6a" stroke-width="0.7"/>
<path d="M354.5 506.0 L380.3 506.0 L380.3 493.5" fill="none" stroke="#ea6a6a" stroke-width="0.8" stroke-dasharray="2.2 1.4" />
<rect x="378.7" y="486.3" width="6.6" height="7.2" fill="#fff" stroke="#ea6a6a" stroke-width="0.9" />
<path d="M385.3 490.0 L389.0 490.0" fill="none" stroke="#ea6a6a" stroke-width="0.8" />
<text x="392.3" y="491.8" font-size="4.27" text-anchor="start" fill="#333" font-weight="normal" textLength="32.8" lengthAdjust="spacingAndGlyphs" >C.O.G Coordinate X</text>
<text x="350.0" y="519.0" font-size="4.27" text-anchor="start" fill="#333" font-weight="normal" textLength="9.2" lengthAdjust="spacingAndGlyphs" >F.O.B</text>
<text x="397.0" y="519.1" font-size="4.56" text-anchor="start" fill="#333" font-weight="normal" textLength="33.9" lengthAdjust="spacingAndGlyphs" >COG computation</text>
<rect x="31.3" y="393.0" width="74.3" height="143.5" fill="#fff" stroke="#c8c8c8" stroke-width="0.9" />
<circle cx="41.0" cy="400.8" r="3.3" fill="#fff" stroke="#58b8c8" stroke-width="1.0"/>
<circle cx="41.0" cy="400.8" r="1.6" fill="#fff" stroke="#90c060" stroke-width="0.7"/>
<text x="49.0" y="402.5" font-size="4.17" text-anchor="start" fill="#333" font-weight="normal" textLength="31.7" lengthAdjust="spacingAndGlyphs" >Gravity acceleration</text>
<circle cx="41.0" cy="412.5" r="3.3" fill="#fff" stroke="#e8a050" stroke-width="1.0"/>
<path d="M39.5 411 l3 3 M42.5 411 l-3 3" stroke="#e8a050" stroke-width="0.6"/>
<text x="49.0" y="414.0" font-size="4.17" text-anchor="start" fill="#333" font-weight="normal" textLength="33.9" lengthAdjust="spacingAndGlyphs" >JET-A1 fuel definition</text>
<circle cx="41.0" cy="424.0" r="3.3" fill="#fff" stroke="#777" stroke-width="1.0"/>
<path d="M39.5 424.5 L42.5 424.5" fill="none" stroke="#999" stroke-width="0.7" />
<text x="51.8" y="425.5" font-size="4.17" text-anchor="start" fill="#333" font-weight="normal" textLength="21.9" lengthAdjust="spacingAndGlyphs" >Gas definition</text>
<path d="M37.5 433.0 L45.0 433.0" fill="none" stroke="#ea6a6a" stroke-width="0.8" stroke-dasharray="2.2 1.4" />
<path d="M37.5 435.7 L45.0 435.7" fill="none" stroke="#ea6a6a" stroke-width="0.8" stroke-dasharray="2.2 1.4" />
<text x="37.5" y="443.5" font-size="4.17" text-anchor="start" fill="#333" font-weight="normal" textLength="51.4" lengthAdjust="spacingAndGlyphs" >Aircraft attitude and acceleration</text>
<circle cx="40.0" cy="453.0" r="2" fill="#fff" stroke="#ea6a6a" stroke-width="0.8"/>
<path d="M42.0 453.0 L51.0 453.0" fill="none" stroke="#ea6a6a" stroke-width="0.8" stroke-dasharray="2.2 1.4" />
<circle cx="40.0" cy="461.0" r="2" fill="#fff" stroke="#ea6a6a" stroke-width="0.8"/>
<path d="M42.0 461.0 L51.0 461.0" fill="none" stroke="#ea6a6a" stroke-width="0.8" stroke-dasharray="2.2 1.4" />
<circle cx="40.0" cy="468.0" r="2" fill="#fff" stroke="#ea6a6a" stroke-width="0.8"/>
<path d="M42.0 468.0 L51.0 468.0" fill="none" stroke="#ea6a6a" stroke-width="0.8" stroke-dasharray="2.2 1.4" />
<circle cx="40.0" cy="481.0" r="2" fill="#fff" stroke="#ea6a6a" stroke-width="0.8"/>
<path d="M42.0 481.0 L51.0 481.0" fill="none" stroke="#ea6a6a" stroke-width="0.8" stroke-dasharray="2.2 1.4" />
<circle cx="40.0" cy="487.5" r="2" fill="#fff" stroke="#ea6a6a" stroke-width="0.8"/>
<path d="M42.0 487.5 L51.0 487.5" fill="none" stroke="#ea6a6a" stroke-width="0.8" stroke-dasharray="2.2 1.4" />
<circle cx="40.0" cy="495.0" r="2" fill="#fff" stroke="#ea6a6a" stroke-width="0.8"/>
<path d="M42.0 495.0 L51.0 495.0" fill="none" stroke="#ea6a6a" stroke-width="0.8" stroke-dasharray="2.2 1.4" />
<path d="M51.0 453.0 L51.0 495.0" fill="none" stroke="#ea6a6a" stroke-width="0.8" stroke-dasharray="2.2 1.4" />
<rect x="54.0" y="466.0" width="20.0" height="18.0" fill="#fafaff" stroke="#7474dc" stroke-width="0.9" />
<path d="M58 478 l4 -7 l3 8 l4 -9 M59 473 h10" fill="none" stroke="#8a8ae4" stroke-width="0.7"/>
<rect x="52.3" y="464.3" width="3.2" height="3.2" fill="#000"/>
<rect x="72.5" y="464.3" width="3.2" height="3.2" fill="#000"/>
<rect x="52.3" y="482.7" width="3.2" height="3.2" fill="#000"/>
<rect x="72.5" y="482.7" width="3.2" height="3.2" fill="#000"/>
<circle cx="38.5" cy="516.0" r="2" fill="#fff" stroke="#ea6a6a" stroke-width="0.8"/>
<path d="M40.5 516.0 L46.0 516.0" fill="none" stroke="#ea6a6a" stroke-width="0.8" stroke-dasharray="2.2 1.4" />
<rect x="46.0" y="511.0" width="7.0" height="11.0" fill="#fff" stroke="#e89090" stroke-width="0.7" />
<path d="M49.5 511.0 L49.5 522.0" fill="none" stroke="#e89090" stroke-width="0.6" />
<path d="M46.0 516.5 L53.0 516.5" fill="none" stroke="#e89090" stroke-width="0.6" />
<path d="M53.0 514.0 L57.0 514.0" fill="none" stroke="#ea6a6a" stroke-width="0.8" stroke-dasharray="2.2 1.4" />
<circle cx="59.0" cy="514.0" r="1.5" fill="#fff" stroke="#ea6a6a" stroke-width="0.7"/>
<path d="M60.5 514.0 L63.0 514.0" fill="none" stroke="#ea6a6a" stroke-width="0.7" />
<path d="M53.0 520.0 L57.0 520.0" fill="none" stroke="#ea6a6a" stroke-width="0.8" stroke-dasharray="2.2 1.4" />
<circle cx="59.0" cy="520.0" r="1.5" fill="#fff" stroke="#ea6a6a" stroke-width="0.7"/>
<path d="M60.5 520.0 L63.0 520.0" fill="none" stroke="#ea6a6a" stroke-width="0.7" />
<text x="65.0" y="515.5" font-size="4.27" text-anchor="start" fill="#333" font-weight="normal" textLength="34.3" lengthAdjust="spacingAndGlyphs" >Ambient temperature</text>
<text x="65.0" y="521.8" font-size="4.27" text-anchor="start" fill="#333" font-weight="normal" textLength="28.8" lengthAdjust="spacingAndGlyphs" >Ambient pressure</text>
<rect x="614" y="0" width="7" height="2.6" fill="#2c80d0"/>
<text x="624" y="2.6" font-size="7.6" fill="#334" textLength="126" lengthAdjust="spacingAndGlyphs">eo_bc_std_simple - fuel_management.ame</text>
<rect x="600" y="0" width="443" height="0" fill="none"/>
<g stroke="#3a3a3a" stroke-width="0.75" stroke-linejoin="round"><path d="M615.2 43.4 l2.9 -3.4 h6.2 l-2.9 3.4 Z" fill="#fff"/><path d="M621.4000000000001 43.4 l2.9 -3.4 v6.2 l-2.9 3.4 Z" fill="#fff"/><rect x="615.2" y="43.4" width="6.2" height="6.2" fill="#f2e66a"/><path d="M615.2 49.6 l2.9 -3.4 h6.2 M618.1 46.2 v-6.2" fill="none" stroke-width="0.45"/></g>
<g stroke="#3a3a3a" stroke-width="0.75" stroke-linejoin="round"><path d="M615.2 59.8 l2.9 -3.4 h6.2 l-2.9 3.4 Z" fill="#fff"/><path d="M621.4000000000001 59.8 l2.9 -3.4 v6.2 l-2.9 3.4 Z" fill="#f2e66a"/><rect x="615.2" y="59.8" width="6.2" height="6.2" fill="#fff"/><path d="M615.2 66.0 l2.9 -3.4 h6.2 M618.1 62.6 v-6.2" fill="none" stroke-width="0.45"/></g>
<g stroke="#3a3a3a" stroke-width="0.75" stroke-linejoin="round"><path d="M615.2 75.9 l2.9 -3.4 h6.2 l-2.9 3.4 Z" fill="#f2e66a"/><path d="M621.4000000000001 75.9 l2.9 -3.4 v6.2 l-2.9 3.4 Z" fill="#fff"/><rect x="615.2" y="75.9" width="6.2" height="6.2" fill="#fff"/><path d="M615.2 82.10000000000001 l2.9 -3.4 h6.2 M618.1 78.7 v-6.2" fill="none" stroke-width="0.45"/></g>
<g stroke="#3a3a3a" stroke-width="0.75" stroke-linejoin="round"><path d="M615.2 92.4 l2.9 -3.4 h6.2 l-2.9 3.4 Z" fill="#fff"/><path d="M621.4000000000001 92.4 l2.9 -3.4 v6.2 l-2.9 3.4 Z" fill="#fff"/><rect x="615.2" y="92.4" width="6.2" height="6.2" fill="#fff"/><path d="M615.2 98.60000000000001 l2.9 -3.4 h6.2 M618.1 95.2 v-6.2" fill="none" stroke-width="0.45"/></g>
<g stroke="#3a3a3a" stroke-width="0.75" stroke-linejoin="round"><path d="M615.2 108.0 l2.9 -3.4 h6.2 l-2.9 3.4 Z" fill="#fff"/><path d="M621.4000000000001 108.0 l2.9 -3.4 v6.2 l-2.9 3.4 Z" fill="#fff"/><rect x="615.2" y="108.0" width="6.2" height="6.2" fill="#fff"/><path d="M615.2 114.2 l2.9 -3.4 h6.2 M618.1 110.8 v-6.2" fill="none" stroke-width="0.45"/></g>
<g stroke="#3a3a3a" stroke-width="0.75" stroke-linejoin="round"><path d="M615.2 124.4 l2.9 -3.4 h6.2 l-2.9 3.4 Z" fill="#fff"/><path d="M621.4000000000001 124.4 l2.9 -3.4 v6.2 l-2.9 3.4 Z" fill="#fff"/><rect x="615.2" y="124.4" width="6.2" height="6.2" fill="#fff"/><path d="M615.2 130.6 l2.9 -3.4 h6.2 M618.1 127.19999999999999 v-6.2" fill="none" stroke-width="0.45"/></g>
<g stroke="#8a7a20" stroke-width="0.7"><path d="M616 141 l3.7 -2.2 l3.7 2.2 l-3.7 2.2 Z" fill="#f6ee90"/><path d="M616 141 v4 l3.7 2.2 v-4 Z" fill="#e8d850"/><path d="M623.4 141 v4 l-3.7 2.2 v-4 Z" fill="#d8c840"/></g>
<g fill="none" stroke="#b4b4b4" stroke-width="0.8"><path d="M621.5 22.5 l2.5 4 M625.5 22.5 l-3.5 5.5"/><circle cx="620.8" cy="28.8" r="1.3"/><circle cx="624" cy="27.5" r="1.2"/><rect x="632.5" y="21.8" width="4.8" height="6.2"/><rect x="634.8" y="23.8" width="4.8" height="6.4" fill="#fff"/><rect x="646.5" y="23" width="7" height="7.2"/><path d="M648.5 23 v-1.5 h3 v1.5"/><rect x="650" y="25" width="4" height="5.2" fill="#fff"/><path d="M661.5 23.3 h7 M662.3 23.3 l0.6 7 h4.2 l0.6 -7 M663.8 23.3 v-1.3 h2.4 v1.3 M664 25 v4 M666 25 v4"/><path d="M684 22.5 l-2.5 2.8 l2.8 1.2 M681.8 25.2 q5 -0.8 6 2.4 q0.4 1.7 -0.6 3"/><path d="M692.8 25.5 l1.4 1.4 l1.4 -1.4"/><path d="M709 22.5 l2.5 2.8 l-2.8 1.2 M711.2 25.2 q-5 -0.8 -6 2.4 q-0.4 1.7 0.6 3"/><path d="M715.8 25.5 l1.4 1.4 l1.4 -1.4"/></g>
<path d="M676 20.5 v11 M722.5 20.5 v11 M799 20.5 v11 M817 20.5 v11" stroke="#dcdcdc" stroke-width="0.7"/>
<path d="M728 22 l0.3 8 l2 -2 l1.6 3 l1.2 -0.6 l-1.6 -3 l2.8 -0.3 Z" fill="#fff" stroke="#333" stroke-width="0.8"/>
<rect x="742" y="22.5" width="6" height="5.5" fill="none" stroke="#444" stroke-width="0.6" stroke-dasharray="1 0.8"/><path d="M745.5 24.5 l0.3 6.5 l1.7 -1.6 l1.2 2.4 l1 -0.5 l-1.2 -2.4 l2.3 -0.3 Z" fill="#fff" stroke="#333" stroke-width="0.7"/>
<circle cx="760.5" cy="25.5" r="3.5" fill="#a8c8e8" stroke="#446" stroke-width="0.8"/><path d="M757 25.5 h7 M760.5 22 v7 M758 23.3 q2.5 2 5 0 M758 27.7 q2.5 -2 5 0" fill="none" stroke="#446" stroke-width="0.5"/><path d="M758.5 29.5 h4 v1.6 h-4 Z" fill="#778" />
<rect x="768.8" y="19.6" width="12.2" height="13.4" fill="#dcecf8" stroke="#a8cce4" stroke-width="0.6"/>
<path d="M774.8 21.5 v9.5 M770 26.2 h9.6 M773.3 23 l1.5 -1.6 l1.5 1.6 M773.3 29.5 l1.5 1.6 l1.5 -1.6 M771.5 24.7 l-1.6 1.5 l1.6 1.5 M778 24.7 l1.6 1.5 l-1.6 1.5" fill="none" stroke="#2a6a96" stroke-width="0.9"/>
<circle cx="791" cy="25" r="3.3" fill="#fff" stroke="#444" stroke-width="0.9"/><path d="M788.6 27.4 l-3 3.2" stroke="#444" stroke-width="1.4"/><path d="M791 23.5 v2 h1.2" stroke="#666" stroke-width="0.5" fill="none"/>
<rect x="804" y="21.5" width="8.5" height="9" fill="#fff" stroke="#2a6a96" stroke-width="0.9"/><path d="M806 23.5 l1.5 1.5 M810.5 23.5 l-1.5 1.5 M806 28.5 l1.5 -1.5 M810.5 28.5 l-1.5 -1.5 M808.2 22.5 v7" stroke="#2a6a96" stroke-width="0.7"/>
<rect x="822" y="23" width="8" height="7.5" fill="#333"/><path d="M822 23 l1 -2 l1.5 2 l1 -2 l1.5 2 l1 -2 l1.5 2" fill="none" stroke="#333" stroke-width="0.8"/><rect x="823.5" y="25" width="2" height="1.6" fill="#fff"/><rect x="827" y="25" width="2" height="1.6" fill="#fff"/><rect x="825.3" y="27.6" width="2" height="1.6" fill="#fff"/>
<path d="M872.5 24.5 l1.6 1.6 l1.6 -1.6" fill="none" stroke="#bbb" stroke-width="0.7"/>
<circle cx="894" cy="26" r="4.3" fill="#fff" stroke="#3a3a3a" stroke-width="0.95"/>
<path d="M891.8 24.4 v3.2 M896.2 24.4 v3.2 M893.8 24.4 l-1.6 1.6 l1.6 1.6 M895.8 24.4 l-1.6 1.6 l1.6 1.6" fill="none" stroke="#3a3a3a" stroke-width="0.75"/>
<circle cx="913" cy="26" r="4.3" fill="#fff" stroke="#3a3a3a" stroke-width="0.95"/>
<path d="M911.4 24.4 v3.2 M914.4 24.4 l-1.8 1.6 l1.8 1.6" fill="none" stroke="#3a3a3a" stroke-width="0.75"/>
<circle cx="931.5" cy="26" r="4.3" fill="#fff" stroke="#777" stroke-width="0.95"/>
<path d="M930.3 24.2 l3 1.8 l-3 1.8 Z" fill="none" stroke="#777" stroke-width="0.75"/>
<circle cx="950" cy="26" r="4.3" fill="#fff" stroke="#3a3a3a" stroke-width="0.95"/>
<path d="M951.6 24.4 v3.2 M948.6 24.4 l1.8 1.6 l-1.8 1.6" fill="none" stroke="#3a3a3a" stroke-width="0.75"/>
<circle cx="969.4" cy="26" r="4.3" fill="#fff" stroke="#3a3a3a" stroke-width="0.95"/>
<path d="M967.1999999999999 24.4 v3.2 M971.6 24.4 v3.2 M967.6 24.4 l1.6 1.6 l-1.6 1.6 M969.6 24.4 l1.6 1.6 l-1.6 1.6" fill="none" stroke="#3a3a3a" stroke-width="0.75"/>
<path d="M1027 24.3 l1.5 -1.6 l1.5 1.6 M1027 27.7 l1.5 1.6 l1.5 -1.6" fill="none" stroke="#444" stroke-width="0.6"/>
<g fill="#dce6f2" stroke="#8a9cb4" stroke-width="0.7"><rect x="986" y="-3" width="15" height="7" rx="1"/><rect x="1003.5" y="-3" width="15.5" height="7" rx="1"/><rect x="1021.4" y="-3" width="16.6" height="7" rx="1"/></g>
<circle cx="654.3" cy="63.3" r="23" fill="#8db4c4" opacity="0.6"/>
<path d="M634 64.6 q1 -1.2 5 -1.4 l30 0.6 q4 0.3 5.4 1.6 q-2 1.3 -5.6 1.2 l-31 -0.5 q-3 -0.2 -3.8 -1.5 Z" fill="#b8bec6" stroke="#5a6068" stroke-width="0.5"/>
<path d="M634.6 63.8 l-1.2 -3.8 l2.6 0.2 l3.6 3.6 Z" fill="#3a8ad0"/>
<path d="M638 66.2 l34 0.6" stroke="#3c4048" stroke-width="1"/>
<path d="M650 65.2 l8 2 l5 -0.4 l-6 -1.8 Z" fill="#4a86c0" opacity="0.8"/>
<path d="M697.3 86.4 L708.6 86 L737 156 L737 159 L689 170.5 L687 169.5 Z" fill="#2f84cf" stroke="#22486e" stroke-width="0.5"/>
<path d="M708.6 86 L737 156 L734.6 158.2 L706.3 87.2 Z" fill="#1c5ea6" opacity="0.55"/>
<path d="M695 110 L715.2 107.3" stroke="#7fb8e8" stroke-width="0.9"/>
<path d="M689 170.5 L737 159 L737 156 L687 167.2 Z" fill="#62a8e2" opacity="0.8"/>
<path d="M687 167 L737 156" stroke="#22486e" stroke-width="0.5"/>
<path d="M689 170.5 L737 159 L753 180 L716.7 191 Z" fill="#1d6db8" stroke="#22486e" stroke-width="0.5"/>
<path d="M687 169.5 L687 180 L716 204.5 L716.7 191 L689 170.5 Z" fill="#4a9adb" stroke="#22486e" stroke-width="0.5"/>
<path d="M689 170.5 L737 159 L737 163 L703 172 L716.7 185 L716.7 191 Z" fill="#4a9adb" opacity="0.55"/>
<path d="M716.7 191 L753 180 L768.5 178 L920 237 L1012 267.4 L1000.4 272.5 L898 245.7 L800 219 L720 196 Z" fill="#2f84cf" stroke="#22486e" stroke-width="0.4"/>
<path d="M716.7 191 L716 204.5 L800 224.5 L898 246.5 L1000.4 272.5 L898 243.3 L800 218 Z" fill="#4a9adb" stroke="#22486e" stroke-width="0.4"/>
<path d="M720 194.5 L768.5 183.6 L800 195 L800 204 Z" fill="#1d6db8" opacity="0.6"/>
<path d="M898 244.5 L920 237" stroke="#22486e" stroke-width="0.6"/>
<path d="M898 245 L920 237 L1012 267.4 L1000.4 272.5 Z" fill="#2b7cc6" opacity="0.3"/>
<path d="M737 156 L768.5 177 L768.5 183.6 M768.5 177 L920 237 M716.7 191 L768.5 177" fill="none" stroke="#2a2a2a" stroke-width="0.6"/>
<circle cx="754" cy="166.5" r="1.5" fill="#e03030"/>
<circle cx="617.5" cy="285.5" r="3.3" fill="#fff" stroke="#556" stroke-width="0.8"/><path d="M616.5 284 l2.2 1.5 l-2.2 1.5 Z" fill="#556"/>
<g fill="none" stroke="#333" stroke-width="0.8"><path d="M621.5 309.5 l2.5 4 M625.5 309.5 l-3.5 5.5"/><circle cx="620.8" cy="315.8" r="1.3"/><circle cx="624" cy="314.5" r="1.2"/><rect x="634" y="308.8" width="4.8" height="6.2"/><rect x="636.3" y="310.8" width="4.8" height="6.4" fill="#fff"/><rect x="648.5" y="310" width="7" height="7.2"/><path d="M650.5 310 v-1.5 h3 v1.5"/><rect x="652" y="312" width="4" height="5.2" fill="#fff"/><path d="M662.5 310.3 h7 M663.3 310.3 l0.6 7 h4.2 l0.6 -7 M664.8 310.3 v-1.3 h2.4 v1.3 M665 312 v4 M667 312 v4"/></g>
<g stroke="#2a7ab0" stroke-width="0.9"><rect x="677.5" y="309" width="5" height="5" fill="#6ab8e0"/><rect x="680.5" y="312" width="5" height="5" fill="#fff"/></g>
<g stroke="#2a7ab0" stroke-width="0.9"><rect x="692" y="309" width="4" height="4" fill="#6ab8e0"/><rect x="696" y="313" width="4" height="4" fill="#6ab8e0"/><path d="M694 313 v2 h2" fill="none"/></g>
<circle cx="715.5" cy="312" r="2.9" fill="#fff" stroke="#444" stroke-width="0.8"/><path d="M713.3 314.2 l-2.6 2.8" stroke="#444" stroke-width="1.3"/>
<circle cx="730" cy="312" r="2.9" fill="#fff" stroke="#444" stroke-width="0.8"/><path d="M727.8 314.2 l-2.6 2.8" stroke="#444" stroke-width="1.3"/>
<circle cx="744.5" cy="312" r="2.9" fill="#fff" stroke="#444" stroke-width="0.8"/><path d="M742.3 314.2 l-2.6 2.8" stroke="#444" stroke-width="1.3"/>
<path d="M775 311.3 l1.3 -1.4 l1.3 1.4 M775 314.3 l1.3 1.4 l1.3 -1.4" fill="none" stroke="#444" stroke-width="0.6"/>
<path d="M903.5 311.3 l1.3 -1.4 l1.3 1.4 M903.5 314.3 l1.3 1.4 l1.3 -1.4" fill="none" stroke="#444" stroke-width="0.6"/>
<circle cx="789" cy="313" r="4.3" fill="#fff" stroke="#3a3a3a" stroke-width="0.95"/>
<path d="M786.8 311.4 v3.2 M791.2 311.4 v3.2 M788.8 311.4 l-1.6 1.6 l1.6 1.6 M790.8 311.4 l-1.6 1.6 l1.6 1.6" fill="none" stroke="#3a3a3a" stroke-width="0.75"/>
<circle cx="803" cy="313" r="4.3" fill="#fff" stroke="#3a3a3a" stroke-width="0.95"/>
<path d="M801.4 311.4 v3.2 M804.4 311.4 l-1.8 1.6 l1.8 1.6" fill="none" stroke="#3a3a3a" stroke-width="0.75"/>
<circle cx="818" cy="313" r="4.3" fill="#fff" stroke="#3a3a3a" stroke-width="0.95"/>
<path d="M816.8 311.2 l3 1.8 l-3 1.8 Z" fill="none" stroke="#3a3a3a" stroke-width="0.75"/>
<circle cx="833" cy="313" r="4.3" fill="#fff" stroke="#3a3a3a" stroke-width="0.95"/>
<path d="M834.6 311.4 v3.2 M831.6 311.4 l1.8 1.6 l-1.8 1.6" fill="none" stroke="#3a3a3a" stroke-width="0.75"/>
<circle cx="847.5" cy="313" r="4.3" fill="#fff" stroke="#3a3a3a" stroke-width="0.95"/>
<path d="M845.3 311.4 v3.2 M849.7 311.4 v3.2 M845.7 311.4 l1.6 1.6 l-1.6 1.6 M847.7 311.4 l1.6 1.6 l-1.6 1.6" fill="none" stroke="#3a3a3a" stroke-width="0.75"/>
<path d="M1016.5 311.8 l1.6 1.6 l1.6 -1.6" fill="none" stroke="#555" stroke-width="0.7"/>
<circle cx="1031.7" cy="313" r="3.8" fill="#fff" stroke="#555" stroke-width="0.8"/><circle cx="1031.7" cy="311.8" r="1" fill="none" stroke="#555" stroke-width="0.6"/><path d="M1029.6 315 q2.1 -2 4.2 0" fill="none" stroke="#555" stroke-width="0.6"/>
<path d="M1033.2 326.8 l1.8 -1.8 l1.8 1.8" fill="none" stroke="#222" stroke-width="1"/>
<path d="M1033.2 610.2 l1.8 1.8 l1.8 -1.8" fill="none" stroke="#222" stroke-width="1"/>
<g fill="none" stroke="#667" stroke-width="0.8"><path d="M1001.3 618 v5 M998 623 h6.6 v3.5 h-6.6 Z M999.8 618 h3"/></g>
<g fill="none" stroke="#c4c4c4" stroke-width="0.8"><path d="M1010 626 v-5 l3 -2.5 v7.5 Z M1013 621 h5 v5 h-8"/><circle cx="1025.8" cy="622.5" r="3.6"/><path d="M1025.8 620.5 v2.2 h1.5"/></g>
<rect x="765" y="322" width="32" height="14" fill="#fff" stroke="#b8b8b8" stroke-width="0.6"/>
<rect x="765" y="322" width="32" height="7.5" fill="#e6e444" stroke="#c8c83c" stroke-width="0.5"/>
<text x="781.0" y="327.046" font-size="3.6" text-anchor="middle" fill="#222" font-weight="bold">L ENG [KG]</text>
<text x="781.0" y="334.046" font-size="3.6" text-anchor="middle" fill="#3030b0">14203.8</text>
<rect x="808" y="322" width="32" height="14" fill="#fff" stroke="#b8b8b8" stroke-width="0.6"/>
<rect x="808" y="322" width="32" height="7.5" fill="#e6e444" stroke="#c8c83c" stroke-width="0.5"/>
<text x="824.0" y="327.046" font-size="3.6" text-anchor="middle" fill="#222" font-weight="bold">FOB - USED</text>
<text x="824.0" y="334.046" font-size="3.6" text-anchor="middle" fill="#3030b0">42847.7</text>
<rect x="849" y="322" width="32" height="14" fill="#fff" stroke="#b8b8b8" stroke-width="0.6"/>
<rect x="849" y="322" width="32" height="7.5" fill="#e6e444" stroke="#c8c83c" stroke-width="0.5"/>
<text x="865.0" y="327.046" font-size="3.6" text-anchor="middle" fill="#222" font-weight="bold">R ENG [KG]</text>
<text x="865.0" y="334.046" font-size="3.6" text-anchor="middle" fill="#3030b0">14203.8</text>
<g fill="#fff" stroke="#3a3a3a" stroke-width="0.8"><path d="M780.5 336 V388.5 M865 336 V388.5 M780.5 365 H787 M865 365 H859" fill="none" stroke-width="0.6"/><circle cx="780.5" cy="351" r="5"/><path d="M780.5 346.5 v9"/><circle cx="792" cy="365" r="5"/><path d="M792 360.5 v9"/><circle cx="865" cy="351" r="5"/><path d="M865 346.5 v9"/><circle cx="854" cy="365" r="5"/><path d="M854 360.5 v9"/><rect x="775.5" y="388.5" width="10.5" height="13.5"/><rect x="775.5" y="404" width="10.5" height="14.5"/><path d="M778 411 h5.5"/><rect x="859.5" y="388.5" width="10.5" height="13.5"/><rect x="859.5" y="404" width="10.5" height="14.5"/><path d="M862 411 h5.5"/><rect x="810.5" y="407" width="11" height="16" stroke-width="1"/><rect x="823.5" y="407" width="11" height="16" stroke-width="1"/><path d="M813 415 h6 M826 415 h6" stroke-width="1"/></g>
<g fill="none" stroke="#777" stroke-width="0.6"><path d="M701 452 V425 L730.4 418.5 L808.5 400 H839 L915.5 418.5 L944 425 V452"/><path d="M808.5 400 L805 454 M839 400 L841.6 454"/><path d="M730.4 418.5 V454 M915.3 418.5 V454"/><path d="M730.4 454 H916"/></g>
<path d="M730.4 430 V450 M915.3 430 V450" stroke="#446" stroke-width="1.1"/><circle cx="730.4" cy="426.3" r="1.2" fill="#fff" stroke="#555" stroke-width="0.5"/><circle cx="915.3" cy="426.3" r="1.2" fill="#fff" stroke="#555" stroke-width="0.5"/>
<rect x="703" y="439" width="25.600000000000023" height="13.5" fill="#fff" stroke="#b8b8b8" stroke-width="0.6"/>
<rect x="703" y="439" width="25.600000000000023" height="7" fill="#e6e444" stroke="#c8c83c" stroke-width="0.5"/>
<text x="715.8" y="443.796" font-size="3.6" text-anchor="middle" fill="#222" font-weight="bold">L OTR [KG]</text>
<text x="715.8" y="450.546" font-size="3.6" text-anchor="middle" fill="#3030b0">87.79</text>
<rect x="752" y="439" width="32" height="13.5" fill="#fff" stroke="#b8b8b8" stroke-width="0.6"/>
<rect x="752" y="439" width="32" height="7" fill="#e6e444" stroke="#c8c83c" stroke-width="0.5"/>
<text x="768.0" y="443.796" font-size="3.6" text-anchor="middle" fill="#222" font-weight="bold">L INR [KG]</text>
<text x="768.0" y="450.546" font-size="3.6" text-anchor="middle" fill="#3030b0">20135.7</text>
<rect x="807" y="439" width="32.60000000000002" height="13.5" fill="#fff" stroke="#b8b8b8" stroke-width="0.6"/>
<rect x="807" y="439" width="32.60000000000002" height="7" fill="#e6e444" stroke="#c8c83c" stroke-width="0.5"/>
<text x="823.3" y="443.796" font-size="3.6" text-anchor="middle" fill="#222" font-weight="bold">CTR [KG]</text>
<text x="823.3" y="450.546" font-size="3.6" text-anchor="middle" fill="#3030b0">475</text>
<rect x="865" y="439" width="32" height="13.5" fill="#fff" stroke="#b8b8b8" stroke-width="0.6"/>
<rect x="865" y="439" width="32" height="7" fill="#e6e444" stroke="#c8c83c" stroke-width="0.5"/>
<text x="881.0" y="443.796" font-size="3.6" text-anchor="middle" fill="#222" font-weight="bold">R INR [KG]</text>
<text x="881.0" y="450.546" font-size="3.6" text-anchor="middle" fill="#3030b0">20135.7</text>
<rect x="917.5" y="439" width="25.5" height="13.5" fill="#fff" stroke="#b8b8b8" stroke-width="0.6"/>
<rect x="917.5" y="439" width="25.5" height="7" fill="#e6e444" stroke="#c8c83c" stroke-width="0.5"/>
<text x="930.25" y="443.796" font-size="3.6" text-anchor="middle" fill="#222" font-weight="bold">R OTR [KG]</text>
<text x="930.25" y="450.546" font-size="3.6" text-anchor="middle" fill="#3030b0">87.81</text>
<rect x="701" y="454.6" width="19" height="8.899999999999977" fill="#fff" stroke="#b8b8b8" stroke-width="0.6"/>
<rect x="701" y="454.6" width="19" height="4.399999999999977" fill="#e6e444" stroke="#c8c83c" stroke-width="0.5"/>
<text x="710.5" y="457.88" font-size="3.0" text-anchor="middle" fill="#222" font-weight="bold">T [C]</text>
<text x="710.5" y="462.33" font-size="3.0" text-anchor="middle" fill="#3030b0">15</text>
<rect x="730.6" y="454.6" width="19.399999999999977" height="8.899999999999977" fill="#fff" stroke="#b8b8b8" stroke-width="0.6"/>
<rect x="730.6" y="454.6" width="19.399999999999977" height="4.399999999999977" fill="#e6e444" stroke="#c8c83c" stroke-width="0.5"/>
<text x="740.3" y="457.88" font-size="3.0" text-anchor="middle" fill="#222" font-weight="bold">T [C]</text>
<text x="740.3" y="462.33" font-size="3.0" text-anchor="middle" fill="#3030b0">15</text>
<rect x="806" y="454.6" width="18.600000000000023" height="8.899999999999977" fill="#fff" stroke="#b8b8b8" stroke-width="0.6"/>
<rect x="806" y="454.6" width="18.600000000000023" height="4.399999999999977" fill="#e6e444" stroke="#c8c83c" stroke-width="0.5"/>
<text x="815.3" y="457.88" font-size="3.0" text-anchor="middle" fill="#222" font-weight="bold">T [C]</text>
<text x="815.3" y="462.33" font-size="3.0" text-anchor="middle" fill="#3030b0">15</text>
<rect x="896.5" y="454.6" width="19.200000000000045" height="8.899999999999977" fill="#fff" stroke="#b8b8b8" stroke-width="0.6"/>
<rect x="896.5" y="454.6" width="19.200000000000045" height="4.399999999999977" fill="#e6e444" stroke="#c8c83c" stroke-width="0.5"/>
<text x="906.1" y="457.88" font-size="3.0" text-anchor="middle" fill="#222" font-weight="bold">T [C]</text>
<text x="906.1" y="462.33" font-size="3.0" text-anchor="middle" fill="#3030b0">15</text>
<rect x="925.6" y="454.6" width="18.399999999999977" height="8.899999999999977" fill="#fff" stroke="#b8b8b8" stroke-width="0.6"/>
<rect x="925.6" y="454.6" width="18.399999999999977" height="4.399999999999977" fill="#e6e444" stroke="#c8c83c" stroke-width="0.5"/>
<text x="934.8" y="457.88" font-size="3.0" text-anchor="middle" fill="#222" font-weight="bold">T [C]</text>
<text x="934.8" y="462.33" font-size="3.0" text-anchor="middle" fill="#3030b0">15</text>
<rect x="700" y="475.5" width="33" height="14.5" fill="#fff" stroke="#b8b8b8" stroke-width="0.6"/>
<rect x="700" y="475.5" width="33" height="7.199999999999989" fill="#e6e444" stroke="#c8c83c" stroke-width="0.5"/>
<text x="716.5" y="480.396" font-size="3.6" text-anchor="middle" fill="#222" font-weight="bold">FOB [KG]</text>
<text x="716.5" y="487.646" font-size="3.6" text-anchor="middle" fill="#3030b0">40996.2</text>
<defs><linearGradient id="gfr" x1="0" y1="0" x2="1" y2="1"><stop offset="0" stop-color="#e2e2e2"/><stop offset="0.5" stop-color="#c4c4c4"/><stop offset="1" stop-color="#b2b2b2"/></linearGradient><linearGradient id="gin" x1="0" y1="0" x2="0" y2="1"><stop offset="0" stop-color="#f2f2f2"/><stop offset="0.48" stop-color="#ececec"/><stop offset="0.5" stop-color="#e0e0e0"/><stop offset="1" stop-color="#e8e8e8"/></linearGradient></defs>
<rect x="697.7" y="520.2" width="44.8" height="83" rx="4.2" fill="url(#gfr)" stroke="#ededed" stroke-width="0.7"/>
<rect x="704.3000000000001" y="524.2" width="34.599999999999994" height="74.4" rx="1.6" fill="#a8a8a8"/>
<rect x="705.0" y="524.8000000000001" width="33.3" height="73.2" rx="1.2" fill="url(#gin)"/>
<path d="M713.3 528.3 A37 37 0 0 1 713.3 594.5" fill="none" stroke="#d3d75c" stroke-width="4.2"/>
<path d="M711.4 590.8 L714.2 596.3" stroke="#4a4a3a" stroke-width="0.7"/>
<text x="709.6" y="588.8" font-size="4.8" text-anchor="middle" fill="#555">0</text>
<path d="M721.0 583.5 L725.6 587.7" stroke="#4a4a3a" stroke-width="0.7"/>
<text x="718.0" y="582.4" font-size="4.8" text-anchor="middle" fill="#555">0.5</text>
<path d="M727.4 573.2 L733.2 575.5" stroke="#4a4a3a" stroke-width="0.7"/>
<text x="723.6" y="573.5" font-size="4.8" text-anchor="middle" fill="#555">1</text>
<path d="M729.6 561.4 L735.8 561.4" stroke="#4a4a3a" stroke-width="0.7"/>
<text x="725.5" y="563.1" font-size="4.8" text-anchor="middle" fill="#555">1.5</text>
<path d="M727.4 549.6 L733.2 547.3" stroke="#4a4a3a" stroke-width="0.7"/>
<text x="723.6" y="552.7" font-size="4.8" text-anchor="middle" fill="#555">2</text>
<path d="M721.0 539.3 L725.6 535.1" stroke="#4a4a3a" stroke-width="0.7"/>
<text x="718.0" y="543.8" font-size="4.8" text-anchor="middle" fill="#555">2.5</text>
<path d="M711.4 532.0 L714.2 526.5" stroke="#4a4a3a" stroke-width="0.7"/>
<text x="709.6" y="537.4" font-size="4.8" text-anchor="middle" fill="#555">3</text>
<path d="M712.4 592.6 L714.2 596.4" stroke="#b8bc48" stroke-width="0.5"/>
<path d="M714.6 591.4 L716.8 595.0" stroke="#b8bc48" stroke-width="0.5"/>
<path d="M716.8 590.0 L719.2 593.4" stroke="#b8bc48" stroke-width="0.5"/>
<path d="M718.9 588.4 L721.5 591.7" stroke="#b8bc48" stroke-width="0.5"/>
<path d="M720.8 586.7 L723.7 589.8" stroke="#b8bc48" stroke-width="0.5"/>
<path d="M722.6 584.9 L725.7 587.7" stroke="#b8bc48" stroke-width="0.5"/>
<path d="M724.3 582.9 L727.6 585.5" stroke="#b8bc48" stroke-width="0.5"/>
<path d="M725.8 580.8 L729.3 583.2" stroke="#b8bc48" stroke-width="0.5"/>
<path d="M727.1 578.7 L730.8 580.7" stroke="#b8bc48" stroke-width="0.5"/>
<path d="M728.3 576.4 L732.1 578.2" stroke="#b8bc48" stroke-width="0.5"/>
<path d="M729.3 574.0 L733.3 575.5" stroke="#b8bc48" stroke-width="0.5"/>
<path d="M730.2 571.6 L734.2 572.8" stroke="#b8bc48" stroke-width="0.5"/>
<path d="M730.8 569.1 L734.9 570.0" stroke="#b8bc48" stroke-width="0.5"/>
<path d="M731.3 566.5 L735.5 567.2" stroke="#b8bc48" stroke-width="0.5"/>
<path d="M731.6 564.0 L735.8 564.3" stroke="#b8bc48" stroke-width="0.5"/>
<path d="M731.7 561.4 L735.9 561.4" stroke="#b8bc48" stroke-width="0.5"/>
<path d="M731.6 558.8 L735.8 558.5" stroke="#b8bc48" stroke-width="0.5"/>
<path d="M731.3 556.3 L735.5 555.6" stroke="#b8bc48" stroke-width="0.5"/>
<path d="M730.8 553.7 L734.9 552.8" stroke="#b8bc48" stroke-width="0.5"/>
<path d="M730.2 551.2 L734.2 550.0" stroke="#b8bc48" stroke-width="0.5"/>
<path d="M729.3 548.8 L733.3 547.3" stroke="#b8bc48" stroke-width="0.5"/>
<path d="M728.3 546.4 L732.1 544.6" stroke="#b8bc48" stroke-width="0.5"/>
<path d="M727.1 544.1 L730.8 542.1" stroke="#b8bc48" stroke-width="0.5"/>
<path d="M725.8 542.0 L729.3 539.6" stroke="#b8bc48" stroke-width="0.5"/>
<path d="M724.3 539.9 L727.6 537.3" stroke="#b8bc48" stroke-width="0.5"/>
<path d="M722.6 537.9 L725.7 535.1" stroke="#b8bc48" stroke-width="0.5"/>
<path d="M720.8 536.1 L723.7 533.0" stroke="#b8bc48" stroke-width="0.5"/>
<path d="M718.9 534.4 L721.5 531.1" stroke="#b8bc48" stroke-width="0.5"/>
<path d="M716.8 532.8 L719.2 529.4" stroke="#b8bc48" stroke-width="0.5"/>
<path d="M714.6 531.4 L716.8 527.8" stroke="#b8bc48" stroke-width="0.5"/>
<path d="M712.4 530.2 L714.2 526.4" stroke="#b8bc48" stroke-width="0.5"/>
<text x="712.0" y="550.4" font-size="5" text-anchor="middle" fill="#333" font-weight="bold" textLength="13.5" lengthAdjust="spacingAndGlyphs">L OTR</text>
<path d="M705.0 555.4 A6 6 0 0 1 705.0 567.4 Z" fill="#c6c6c6"/>
<path d="M705.0 555.4 A6 6 0 0 1 705.0 567.4" fill="none" stroke="#6e6e6e" stroke-width="1.4"/>
<path d="M706.2 554.6 L717.2 533.3" stroke="#f0b8c0" stroke-width="2.6" stroke-linecap="round" opacity="0.7"/>
<path d="M706.2 554.6 L717.2 533.3" stroke="#bf4256" stroke-width="1.5" stroke-linecap="round"/>
<text x="718" y="610.3000000000001" font-size="7.8" text-anchor="middle" fill="#d6ca54" textLength="30.5" lengthAdjust="spacingAndGlyphs">L OTR [T]</text>
<rect x="748.4" y="520.2" width="44.8" height="83" rx="4.2" fill="url(#gfr)" stroke="#ededed" stroke-width="0.7"/>
<rect x="755.0" y="524.2" width="34.599999999999994" height="74.4" rx="1.6" fill="#a8a8a8"/>
<rect x="755.6999999999999" y="524.8000000000001" width="33.3" height="73.2" rx="1.2" fill="url(#gin)"/>
<path d="M764.0 528.3 A37 37 0 0 1 764.0 594.5" fill="none" stroke="#d3d75c" stroke-width="4.2"/>
<path d="M762.1 590.8 L764.9 596.3" stroke="#4a4a3a" stroke-width="0.7"/>
<text x="760.3" y="588.8" font-size="4.8" text-anchor="middle" fill="#555">0</text>
<path d="M770.5 584.7 L774.9 589.1" stroke="#4a4a3a" stroke-width="0.7"/>
<text x="767.7" y="583.5" font-size="4.8" text-anchor="middle" fill="#555">5</text>
<path d="M776.7 576.4 L782.2 579.2" stroke="#4a4a3a" stroke-width="0.7"/>
<text x="773.0" y="576.2" font-size="4.8" text-anchor="middle" fill="#555">10</text>
<path d="M779.9 566.6 L786.0 567.5" stroke="#4a4a3a" stroke-width="0.7"/>
<text x="775.8" y="567.6" font-size="4.8" text-anchor="middle" fill="#555">15</text>
<path d="M779.9 556.2 L786.0 555.3" stroke="#4a4a3a" stroke-width="0.7"/>
<text x="775.8" y="558.6" font-size="4.8" text-anchor="middle" fill="#555">20</text>
<path d="M776.7 546.4 L782.2 543.6" stroke="#4a4a3a" stroke-width="0.7"/>
<text x="773.0" y="550.0" font-size="4.8" text-anchor="middle" fill="#555">25</text>
<path d="M770.5 538.1 L774.9 533.7" stroke="#4a4a3a" stroke-width="0.7"/>
<text x="767.7" y="542.7" font-size="4.8" text-anchor="middle" fill="#555">30</text>
<path d="M762.1 532.0 L764.9 526.5" stroke="#4a4a3a" stroke-width="0.7"/>
<text x="760.3" y="537.4" font-size="4.8" text-anchor="middle" fill="#555">35</text>
<path d="M763.1 592.6 L764.9 596.4" stroke="#b8bc48" stroke-width="0.5"/>
<path d="M765.0 591.6 L767.1 595.2" stroke="#b8bc48" stroke-width="0.5"/>
<path d="M766.9 590.4 L769.2 593.9" stroke="#b8bc48" stroke-width="0.5"/>
<path d="M768.7 589.1 L771.2 592.5" stroke="#b8bc48" stroke-width="0.5"/>
<path d="M770.4 587.7 L773.2 590.9" stroke="#b8bc48" stroke-width="0.5"/>
<path d="M772.0 586.2 L775.0 589.2" stroke="#b8bc48" stroke-width="0.5"/>
<path d="M773.5 584.6 L776.7 587.4" stroke="#b8bc48" stroke-width="0.5"/>
<path d="M775.0 582.9 L778.3 585.5" stroke="#b8bc48" stroke-width="0.5"/>
<path d="M776.3 581.2 L779.7 583.5" stroke="#b8bc48" stroke-width="0.5"/>
<path d="M777.5 579.3 L781.1 581.4" stroke="#b8bc48" stroke-width="0.5"/>
<path d="M778.5 577.4 L782.3 579.3" stroke="#b8bc48" stroke-width="0.5"/>
<path d="M779.5 575.4 L783.3 577.0" stroke="#b8bc48" stroke-width="0.5"/>
<path d="M780.3 573.3 L784.3 574.7" stroke="#b8bc48" stroke-width="0.5"/>
<path d="M781.0 571.2 L785.0 572.4" stroke="#b8bc48" stroke-width="0.5"/>
<path d="M781.5 569.1 L785.6 570.0" stroke="#b8bc48" stroke-width="0.5"/>
<path d="M782.0 566.9 L786.1 567.6" stroke="#b8bc48" stroke-width="0.5"/>
<path d="M782.2 564.7 L786.4 565.1" stroke="#b8bc48" stroke-width="0.5"/>
<path d="M782.4 562.5 L786.6 562.6" stroke="#b8bc48" stroke-width="0.5"/>
<path d="M782.4 560.3 L786.6 560.2" stroke="#b8bc48" stroke-width="0.5"/>
<path d="M782.2 558.1 L786.4 557.7" stroke="#b8bc48" stroke-width="0.5"/>
<path d="M782.0 555.9 L786.1 555.2" stroke="#b8bc48" stroke-width="0.5"/>
<path d="M781.5 553.7 L785.6 552.8" stroke="#b8bc48" stroke-width="0.5"/>
<path d="M781.0 551.6 L785.0 550.4" stroke="#b8bc48" stroke-width="0.5"/>
<path d="M780.3 549.5 L784.3 548.1" stroke="#b8bc48" stroke-width="0.5"/>
<path d="M779.5 547.4 L783.3 545.8" stroke="#b8bc48" stroke-width="0.5"/>
<path d="M778.5 545.4 L782.3 543.5" stroke="#b8bc48" stroke-width="0.5"/>
<path d="M777.5 543.5 L781.1 541.4" stroke="#b8bc48" stroke-width="0.5"/>
<path d="M776.3 541.6 L779.7 539.3" stroke="#b8bc48" stroke-width="0.5"/>
<path d="M775.0 539.9 L778.3 537.3" stroke="#b8bc48" stroke-width="0.5"/>
<path d="M773.5 538.2 L776.7 535.4" stroke="#b8bc48" stroke-width="0.5"/>
<path d="M772.0 536.6 L775.0 533.6" stroke="#b8bc48" stroke-width="0.5"/>
<path d="M770.4 535.1 L773.2 531.9" stroke="#b8bc48" stroke-width="0.5"/>
<path d="M768.7 533.7 L771.2 530.3" stroke="#b8bc48" stroke-width="0.5"/>
<path d="M766.9 532.4 L769.2 528.9" stroke="#b8bc48" stroke-width="0.5"/>
<path d="M765.0 531.2 L767.1 527.6" stroke="#b8bc48" stroke-width="0.5"/>
<path d="M763.1 530.2 L764.9 526.4" stroke="#b8bc48" stroke-width="0.5"/>
<text x="762.7" y="550.4" font-size="5" text-anchor="middle" fill="#333" font-weight="bold" textLength="13.5" lengthAdjust="spacingAndGlyphs">L INR</text>
<path d="M755.7 555.4 A6 6 0 0 1 755.7 567.4 Z" fill="#c6c6c6"/>
<path d="M755.7 555.4 A6 6 0 0 1 755.7 567.4" fill="none" stroke="#6e6e6e" stroke-width="1.4"/>
<path d="M760.7 558.3 L783.3 550.3" stroke="#f0b8c0" stroke-width="2.6" stroke-linecap="round" opacity="0.7"/>
<path d="M760.7 558.3 L783.3 550.3" stroke="#bf4256" stroke-width="1.5" stroke-linecap="round"/>
<text x="769.5" y="610.3000000000001" font-size="7.8" text-anchor="middle" fill="#d6ca54" textLength="30.5" lengthAdjust="spacingAndGlyphs">L INR [T]</text>
<rect x="798.8" y="519.8" width="44.8" height="83" rx="4.2" fill="url(#gfr)" stroke="#ededed" stroke-width="0.7"/>
<rect x="805.4" y="523.8" width="34.599999999999994" height="74.4" rx="1.6" fill="#a8a8a8"/>
<rect x="806.0999999999999" y="524.4" width="33.3" height="73.2" rx="1.2" fill="url(#gin)"/>
<path d="M814.4 527.9 A37 37 0 0 1 814.4 594.1" fill="none" stroke="#d3d75c" stroke-width="4.2"/>
<path d="M812.5 590.4 L815.3 595.9" stroke="#4a4a3a" stroke-width="0.7"/>
<text x="810.7" y="588.4" font-size="4.8" text-anchor="middle" fill="#555">0</text>
<path d="M820.9 584.3 L825.3 588.7" stroke="#4a4a3a" stroke-width="0.7"/>
<text x="818.1" y="583.1" font-size="4.8" text-anchor="middle" fill="#555">5</text>
<path d="M827.1 576.0 L832.6 578.8" stroke="#4a4a3a" stroke-width="0.7"/>
<text x="823.4" y="575.8" font-size="4.8" text-anchor="middle" fill="#555">10</text>
<path d="M830.3 566.2 L836.4 567.1" stroke="#4a4a3a" stroke-width="0.7"/>
<text x="826.2" y="567.2" font-size="4.8" text-anchor="middle" fill="#555">15</text>
<path d="M830.3 555.8 L836.4 554.9" stroke="#4a4a3a" stroke-width="0.7"/>
<text x="826.2" y="558.2" font-size="4.8" text-anchor="middle" fill="#555">20</text>
<path d="M827.1 546.0 L832.6 543.2" stroke="#4a4a3a" stroke-width="0.7"/>
<text x="823.4" y="549.6" font-size="4.8" text-anchor="middle" fill="#555">25</text>
<path d="M820.9 537.7 L825.3 533.3" stroke="#4a4a3a" stroke-width="0.7"/>
<text x="818.1" y="542.3" font-size="4.8" text-anchor="middle" fill="#555">30</text>
<path d="M812.5 531.6 L815.3 526.1" stroke="#4a4a3a" stroke-width="0.7"/>
<text x="810.7" y="537.0" font-size="4.8" text-anchor="middle" fill="#555">35</text>
<path d="M813.5 592.2 L815.3 596.0" stroke="#b8bc48" stroke-width="0.5"/>
<path d="M815.4 591.2 L817.5 594.8" stroke="#b8bc48" stroke-width="0.5"/>
<path d="M817.3 590.0 L819.6 593.5" stroke="#b8bc48" stroke-width="0.5"/>
<path d="M819.1 588.7 L821.6 592.1" stroke="#b8bc48" stroke-width="0.5"/>
<path d="M820.8 587.3 L823.6 590.5" stroke="#b8bc48" stroke-width="0.5"/>
<path d="M822.4 585.8 L825.4 588.8" stroke="#b8bc48" stroke-width="0.5"/>
<path d="M823.9 584.2 L827.1 587.0" stroke="#b8bc48" stroke-width="0.5"/>
<path d="M825.4 582.5 L828.7 585.1" stroke="#b8bc48" stroke-width="0.5"/>
<path d="M826.7 580.8 L830.1 583.1" stroke="#b8bc48" stroke-width="0.5"/>
<path d="M827.9 578.9 L831.5 581.0" stroke="#b8bc48" stroke-width="0.5"/>
<path d="M828.9 577.0 L832.7 578.9" stroke="#b8bc48" stroke-width="0.5"/>
<path d="M829.9 575.0 L833.7 576.6" stroke="#b8bc48" stroke-width="0.5"/>
<path d="M830.7 572.9 L834.7 574.3" stroke="#b8bc48" stroke-width="0.5"/>
<path d="M831.4 570.8 L835.4 572.0" stroke="#b8bc48" stroke-width="0.5"/>
<path d="M831.9 568.7 L836.0 569.6" stroke="#b8bc48" stroke-width="0.5"/>
<path d="M832.4 566.5 L836.5 567.2" stroke="#b8bc48" stroke-width="0.5"/>
<path d="M832.6 564.3 L836.8 564.7" stroke="#b8bc48" stroke-width="0.5"/>
<path d="M832.8 562.1 L837.0 562.2" stroke="#b8bc48" stroke-width="0.5"/>
<path d="M832.8 559.9 L837.0 559.8" stroke="#b8bc48" stroke-width="0.5"/>
<path d="M832.6 557.7 L836.8 557.3" stroke="#b8bc48" stroke-width="0.5"/>
<path d="M832.4 555.5 L836.5 554.8" stroke="#b8bc48" stroke-width="0.5"/>
<path d="M831.9 553.3 L836.0 552.4" stroke="#b8bc48" stroke-width="0.5"/>
<path d="M831.4 551.2 L835.4 550.0" stroke="#b8bc48" stroke-width="0.5"/>
<path d="M830.7 549.1 L834.7 547.7" stroke="#b8bc48" stroke-width="0.5"/>
<path d="M829.9 547.0 L833.7 545.4" stroke="#b8bc48" stroke-width="0.5"/>
<path d="M828.9 545.0 L832.7 543.1" stroke="#b8bc48" stroke-width="0.5"/>
<path d="M827.9 543.1 L831.5 541.0" stroke="#b8bc48" stroke-width="0.5"/>
<path d="M826.7 541.2 L830.1 538.9" stroke="#b8bc48" stroke-width="0.5"/>
<path d="M825.4 539.5 L828.7 536.9" stroke="#b8bc48" stroke-width="0.5"/>
<path d="M823.9 537.8 L827.1 535.0" stroke="#b8bc48" stroke-width="0.5"/>
<path d="M822.4 536.2 L825.4 533.2" stroke="#b8bc48" stroke-width="0.5"/>
<path d="M820.8 534.7 L823.6 531.5" stroke="#b8bc48" stroke-width="0.5"/>
<path d="M819.1 533.3 L821.6 529.9" stroke="#b8bc48" stroke-width="0.5"/>
<path d="M817.3 532.0 L819.6 528.5" stroke="#b8bc48" stroke-width="0.5"/>
<path d="M815.4 530.8 L817.5 527.2" stroke="#b8bc48" stroke-width="0.5"/>
<path d="M813.5 529.8 L815.3 526.0" stroke="#b8bc48" stroke-width="0.5"/>
<text x="813.1" y="550.0" font-size="5" text-anchor="middle" fill="#333" font-weight="bold" textLength="13.5" lengthAdjust="spacingAndGlyphs">CTR</text>
<path d="M806.1 555.0 A6 6 0 0 1 806.1 567.0 Z" fill="#c6c6c6"/>
<path d="M806.1 555.0 A6 6 0 0 1 806.1 567.0" fill="none" stroke="#6e6e6e" stroke-width="1.4"/>
<path d="M807.0 567.3 L816.3 592.0" stroke="#f0b8c0" stroke-width="2.6" stroke-linecap="round" opacity="0.7"/>
<path d="M807.0 567.3 L816.3 592.0" stroke="#bf4256" stroke-width="1.5" stroke-linecap="round"/>
<text x="822.2" y="611.1" font-size="7.8" text-anchor="middle" fill="#d6ca54" textLength="24.5" lengthAdjust="spacingAndGlyphs">CTR [T]</text>
<rect x="849.6" y="521" width="44.8" height="83" rx="4.2" fill="url(#gfr)" stroke="#ededed" stroke-width="0.7"/>
<rect x="856.2" y="525" width="34.599999999999994" height="74.4" rx="1.6" fill="#a8a8a8"/>
<rect x="856.9" y="525.6" width="33.3" height="73.2" rx="1.2" fill="url(#gin)"/>
<path d="M865.2 529.1 A37 37 0 0 1 865.2 595.3" fill="none" stroke="#d3d75c" stroke-width="4.2"/>
<path d="M863.3 591.6 L866.1 597.1" stroke="#4a4a3a" stroke-width="0.7"/>
<text x="861.5" y="589.6" font-size="4.8" text-anchor="middle" fill="#555">0</text>
<path d="M871.7 585.5 L876.1 589.9" stroke="#4a4a3a" stroke-width="0.7"/>
<text x="868.9" y="584.3" font-size="4.8" text-anchor="middle" fill="#555">5</text>
<path d="M877.9 577.2 L883.4 580.0" stroke="#4a4a3a" stroke-width="0.7"/>
<text x="874.2" y="577.0" font-size="4.8" text-anchor="middle" fill="#555">10</text>
<path d="M881.1 567.4 L887.2 568.3" stroke="#4a4a3a" stroke-width="0.7"/>
<text x="877.0" y="568.4" font-size="4.8" text-anchor="middle" fill="#555">15</text>
<path d="M881.1 557.0 L887.2 556.1" stroke="#4a4a3a" stroke-width="0.7"/>
<text x="877.0" y="559.4" font-size="4.8" text-anchor="middle" fill="#555">20</text>
<path d="M877.9 547.2 L883.4 544.4" stroke="#4a4a3a" stroke-width="0.7"/>
<text x="874.2" y="550.8" font-size="4.8" text-anchor="middle" fill="#555">25</text>
<path d="M871.7 538.9 L876.1 534.5" stroke="#4a4a3a" stroke-width="0.7"/>
<text x="868.9" y="543.5" font-size="4.8" text-anchor="middle" fill="#555">30</text>
<path d="M863.3 532.8 L866.1 527.3" stroke="#4a4a3a" stroke-width="0.7"/>
<text x="861.5" y="538.2" font-size="4.8" text-anchor="middle" fill="#555">35</text>
<path d="M864.3 593.4 L866.1 597.2" stroke="#b8bc48" stroke-width="0.5"/>
<path d="M866.2 592.4 L868.3 596.0" stroke="#b8bc48" stroke-width="0.5"/>
<path d="M868.1 591.2 L870.4 594.7" stroke="#b8bc48" stroke-width="0.5"/>
<path d="M869.9 589.9 L872.4 593.3" stroke="#b8bc48" stroke-width="0.5"/>
<path d="M871.6 588.5 L874.4 591.7" stroke="#b8bc48" stroke-width="0.5"/>
<path d="M873.2 587.0 L876.2 590.0" stroke="#b8bc48" stroke-width="0.5"/>
<path d="M874.7 585.4 L877.9 588.2" stroke="#b8bc48" stroke-width="0.5"/>
<path d="M876.2 583.7 L879.5 586.3" stroke="#b8bc48" stroke-width="0.5"/>
<path d="M877.5 582.0 L880.9 584.3" stroke="#b8bc48" stroke-width="0.5"/>
<path d="M878.7 580.1 L882.3 582.2" stroke="#b8bc48" stroke-width="0.5"/>
<path d="M879.7 578.2 L883.5 580.1" stroke="#b8bc48" stroke-width="0.5"/>
<path d="M880.7 576.2 L884.5 577.8" stroke="#b8bc48" stroke-width="0.5"/>
<path d="M881.5 574.1 L885.5 575.5" stroke="#b8bc48" stroke-width="0.5"/>
<path d="M882.2 572.0 L886.2 573.2" stroke="#b8bc48" stroke-width="0.5"/>
<path d="M882.7 569.9 L886.8 570.8" stroke="#b8bc48" stroke-width="0.5"/>
<path d="M883.2 567.7 L887.3 568.4" stroke="#b8bc48" stroke-width="0.5"/>
<path d="M883.4 565.5 L887.6 565.9" stroke="#b8bc48" stroke-width="0.5"/>
<path d="M883.6 563.3 L887.8 563.4" stroke="#b8bc48" stroke-width="0.5"/>
<path d="M883.6 561.1 L887.8 561.0" stroke="#b8bc48" stroke-width="0.5"/>
<path d="M883.4 558.9 L887.6 558.5" stroke="#b8bc48" stroke-width="0.5"/>
<path d="M883.2 556.7 L887.3 556.0" stroke="#b8bc48" stroke-width="0.5"/>
<path d="M882.7 554.5 L886.8 553.6" stroke="#b8bc48" stroke-width="0.5"/>
<path d="M882.2 552.4 L886.2 551.2" stroke="#b8bc48" stroke-width="0.5"/>
<path d="M881.5 550.3 L885.5 548.9" stroke="#b8bc48" stroke-width="0.5"/>
<path d="M880.7 548.2 L884.5 546.6" stroke="#b8bc48" stroke-width="0.5"/>
<path d="M879.7 546.2 L883.5 544.3" stroke="#b8bc48" stroke-width="0.5"/>
<path d="M878.7 544.3 L882.3 542.2" stroke="#b8bc48" stroke-width="0.5"/>
<path d="M877.5 542.4 L880.9 540.1" stroke="#b8bc48" stroke-width="0.5"/>
<path d="M876.2 540.7 L879.5 538.1" stroke="#b8bc48" stroke-width="0.5"/>
<path d="M874.7 539.0 L877.9 536.2" stroke="#b8bc48" stroke-width="0.5"/>
<path d="M873.2 537.4 L876.2 534.4" stroke="#b8bc48" stroke-width="0.5"/>
<path d="M871.6 535.9 L874.4 532.7" stroke="#b8bc48" stroke-width="0.5"/>
<path d="M869.9 534.5 L872.4 531.1" stroke="#b8bc48" stroke-width="0.5"/>
<path d="M868.1 533.2 L870.4 529.7" stroke="#b8bc48" stroke-width="0.5"/>
<path d="M866.2 532.0 L868.3 528.4" stroke="#b8bc48" stroke-width="0.5"/>
<path d="M864.3 531.0 L866.1 527.2" stroke="#b8bc48" stroke-width="0.5"/>
<text x="863.9" y="551.2" font-size="5" text-anchor="middle" fill="#333" font-weight="bold" textLength="13.5" lengthAdjust="spacingAndGlyphs">R INR</text>
<path d="M856.9 556.2 A6 6 0 0 1 856.9 568.2 Z" fill="#c6c6c6"/>
<path d="M856.9 556.2 A6 6 0 0 1 856.9 568.2" fill="none" stroke="#6e6e6e" stroke-width="1.4"/>
<path d="M862.3 558.8 L886.0 550.3" stroke="#f0b8c0" stroke-width="2.6" stroke-linecap="round" opacity="0.7"/>
<path d="M862.3 558.8 L886.0 550.3" stroke="#bf4256" stroke-width="1.5" stroke-linecap="round"/>
<text x="873.3" y="611.7" font-size="7.8" text-anchor="middle" fill="#d6ca54" textLength="30.5" lengthAdjust="spacingAndGlyphs">R INR [T]</text>
<rect x="899.9" y="522" width="44.8" height="83" rx="4.2" fill="url(#gfr)" stroke="#ededed" stroke-width="0.7"/>
<rect x="906.5" y="526" width="34.599999999999994" height="74.4" rx="1.6" fill="#a8a8a8"/>
<rect x="907.1999999999999" y="526.6" width="33.3" height="73.2" rx="1.2" fill="url(#gin)"/>
<path d="M915.5 530.1 A37 37 0 0 1 915.5 596.3" fill="none" stroke="#d3d75c" stroke-width="4.2"/>
<path d="M913.6 592.6 L916.4 598.1" stroke="#4a4a3a" stroke-width="0.7"/>
<text x="911.8" y="590.6" font-size="4.8" text-anchor="middle" fill="#555">0</text>
<path d="M923.2 585.3 L927.8 589.5" stroke="#4a4a3a" stroke-width="0.7"/>
<text x="920.2" y="584.2" font-size="4.8" text-anchor="middle" fill="#555">0.5</text>
<path d="M929.6 575.0 L935.4 577.3" stroke="#4a4a3a" stroke-width="0.7"/>
<text x="925.8" y="575.3" font-size="4.8" text-anchor="middle" fill="#555">1</text>
<path d="M931.8 563.2 L938.0 563.2" stroke="#4a4a3a" stroke-width="0.7"/>
<text x="927.7" y="564.9" font-size="4.8" text-anchor="middle" fill="#555">1.5</text>
<path d="M929.6 551.4 L935.4 549.1" stroke="#4a4a3a" stroke-width="0.7"/>
<text x="925.8" y="554.5" font-size="4.8" text-anchor="middle" fill="#555">2</text>
<path d="M923.2 541.1 L927.8 536.9" stroke="#4a4a3a" stroke-width="0.7"/>
<text x="920.2" y="545.6" font-size="4.8" text-anchor="middle" fill="#555">2.5</text>
<path d="M913.6 533.8 L916.4 528.3" stroke="#4a4a3a" stroke-width="0.7"/>
<text x="911.8" y="539.2" font-size="4.8" text-anchor="middle" fill="#555">3</text>
<path d="M914.6 594.4 L916.4 598.2" stroke="#b8bc48" stroke-width="0.5"/>
<path d="M916.8 593.2 L919.0 596.8" stroke="#b8bc48" stroke-width="0.5"/>
<path d="M919.0 591.8 L921.4 595.2" stroke="#b8bc48" stroke-width="0.5"/>
<path d="M921.1 590.2 L923.7 593.5" stroke="#b8bc48" stroke-width="0.5"/>
<path d="M923.0 588.5 L925.9 591.6" stroke="#b8bc48" stroke-width="0.5"/>
<path d="M924.8 586.7 L927.9 589.5" stroke="#b8bc48" stroke-width="0.5"/>
<path d="M926.5 584.7 L929.8 587.3" stroke="#b8bc48" stroke-width="0.5"/>
<path d="M928.0 582.6 L931.5 585.0" stroke="#b8bc48" stroke-width="0.5"/>
<path d="M929.3 580.5 L933.0 582.5" stroke="#b8bc48" stroke-width="0.5"/>
<path d="M930.5 578.2 L934.3 580.0" stroke="#b8bc48" stroke-width="0.5"/>
<path d="M931.5 575.8 L935.5 577.3" stroke="#b8bc48" stroke-width="0.5"/>
<path d="M932.4 573.4 L936.4 574.6" stroke="#b8bc48" stroke-width="0.5"/>
<path d="M933.0 570.9 L937.1 571.8" stroke="#b8bc48" stroke-width="0.5"/>
<path d="M933.5 568.3 L937.7 569.0" stroke="#b8bc48" stroke-width="0.5"/>
<path d="M933.8 565.8 L938.0 566.1" stroke="#b8bc48" stroke-width="0.5"/>
<path d="M933.9 563.2 L938.1 563.2" stroke="#b8bc48" stroke-width="0.5"/>
<path d="M933.8 560.6 L938.0 560.3" stroke="#b8bc48" stroke-width="0.5"/>
<path d="M933.5 558.1 L937.7 557.4" stroke="#b8bc48" stroke-width="0.5"/>
<path d="M933.0 555.5 L937.1 554.6" stroke="#b8bc48" stroke-width="0.5"/>
<path d="M932.4 553.0 L936.4 551.8" stroke="#b8bc48" stroke-width="0.5"/>
<path d="M931.5 550.6 L935.5 549.1" stroke="#b8bc48" stroke-width="0.5"/>
<path d="M930.5 548.2 L934.3 546.4" stroke="#b8bc48" stroke-width="0.5"/>
<path d="M929.3 545.9 L933.0 543.9" stroke="#b8bc48" stroke-width="0.5"/>
<path d="M928.0 543.8 L931.5 541.4" stroke="#b8bc48" stroke-width="0.5"/>
<path d="M926.5 541.7 L929.8 539.1" stroke="#b8bc48" stroke-width="0.5"/>
<path d="M924.8 539.7 L927.9 536.9" stroke="#b8bc48" stroke-width="0.5"/>
<path d="M923.0 537.9 L925.9 534.8" stroke="#b8bc48" stroke-width="0.5"/>
<path d="M921.1 536.2 L923.7 532.9" stroke="#b8bc48" stroke-width="0.5"/>
<path d="M919.0 534.6 L921.4 531.2" stroke="#b8bc48" stroke-width="0.5"/>
<path d="M916.8 533.2 L919.0 529.6" stroke="#b8bc48" stroke-width="0.5"/>
<path d="M914.6 532.0 L916.4 528.2" stroke="#b8bc48" stroke-width="0.5"/>
<text x="914.2" y="552.2" font-size="5" text-anchor="middle" fill="#333" font-weight="bold" textLength="13.5" lengthAdjust="spacingAndGlyphs">R OTR</text>
<path d="M907.2 557.2 A6 6 0 0 1 907.2 569.2 Z" fill="#c6c6c6"/>
<path d="M907.2 557.2 A6 6 0 0 1 907.2 569.2" fill="none" stroke="#6e6e6e" stroke-width="1.4"/>
<path d="M908.2 557.6 L922.7 536.7" stroke="#f0b8c0" stroke-width="2.6" stroke-linecap="round" opacity="0.7"/>
<path d="M908.2 557.6 L922.7 536.7" stroke="#bf4256" stroke-width="1.5" stroke-linecap="round"/>
<text x="921.9" y="612.7" font-size="7.8" text-anchor="middle" fill="#d6ca54" textLength="30.5" lengthAdjust="spacingAndGlyphs">R OTR [T]</text>
<text x="4.0" y="8.9" font-size="6.9" fill="#e2f1f8" font-weight="normal" textLength="7.0" lengthAdjust="spacingAndGlyphs">File</text>
<text x="26.0" y="8.9" font-size="6.9" fill="#e2f1f8" font-weight="normal" textLength="10.0" lengthAdjust="spacingAndGlyphs">Edit</text>
<text x="49.0" y="8.9" font-size="6.9" fill="#e2f1f8" font-weight="normal" textLength="17.0" lengthAdjust="spacingAndGlyphs">Sketch</text>
<text x="80.0" y="8.9" font-size="6.9" fill="#e2f1f8" font-weight="normal" textLength="25.0" lengthAdjust="spacingAndGlyphs">Configure</text>
<text x="118.0" y="8.9" font-size="6.9" fill="#e2f1f8" font-weight="normal" textLength="22.0" lengthAdjust="spacingAndGlyphs">Simulate</text>
<text x="153.0" y="8.9" font-size="6.9" fill="#e2f1f8" font-weight="normal" textLength="27.0" lengthAdjust="spacingAndGlyphs">Interfaces</text>
<text x="193.0" y="8.9" font-size="6.9" fill="#e2f1f8" font-weight="normal" textLength="14.0" lengthAdjust="spacingAndGlyphs">Tools</text>
<text x="220.0" y="8.9" font-size="6.9" fill="#e2f1f8" font-weight="normal" textLength="12.0" lengthAdjust="spacingAndGlyphs">Help</text>
<text x="68.6" y="27.5" font-size="6.6" fill="#333" font-weight="normal" textLength="22.4" lengthAdjust="spacingAndGlyphs">SKETCH</text>
<text x="113.5" y="27.5" font-size="6.6" fill="#333" font-weight="normal" textLength="32.5" lengthAdjust="spacingAndGlyphs">SUBMODEL</text>
<text x="162.0" y="27.5" font-size="6.6" fill="#333" font-weight="normal" textLength="34.0" lengthAdjust="spacingAndGlyphs">PARAMETER</text>
<text x="211.5" y="27.5" font-size="6.6" fill="#3a7fa5" font-weight="normal" textLength="35.0" lengthAdjust="spacingAndGlyphs">SIMULATION</text>
<text x="17.5" y="49.0" font-size="7" fill="#222" font-weight="normal" textLength="37.5" lengthAdjust="spacingAndGlyphs">Run simulation</text>
<text x="80.0" y="49.0" font-size="7" fill="#222" font-weight="normal" textLength="42.0" lengthAdjust="spacingAndGlyphs">Run Parameters</text>
<text x="150.0" y="49.0" font-size="7" fill="#222" font-weight="normal" textLength="47.0" lengthAdjust="spacingAndGlyphs">Global parameters</text>
<text x="225.0" y="49.0" font-size="7" fill="#222" font-weight="normal" textLength="57.5" lengthAdjust="spacingAndGlyphs">Performance Analyzer</text>
<text x="307.5" y="49.0" font-size="7" fill="#222" font-weight="normal" textLength="38.5" lengthAdjust="spacingAndGlyphs">Study Manager</text>
<text x="399.0" y="49.0" font-size="7" fill="#222" font-weight="normal" textLength="46.0" lengthAdjust="spacingAndGlyphs">Temporal analysis</text>
<text x="166.5" y="68.3" font-size="6.5" fill="#222" font-weight="normal" textLength="65.0" lengthAdjust="spacingAndGlyphs">fuel_management.ame *</text>
<text x="618.8" y="14.3" font-size="6.5" fill="#222" font-weight="normal" textLength="8.2" lengthAdjust="spacingAndGlyphs">File</text>
<text x="640.8" y="14.3" font-size="6.5" fill="#222" font-weight="normal" textLength="10.0" lengthAdjust="spacingAndGlyphs">Edit</text>
<text x="663.8" y="14.3" font-size="6.5" fill="#222" font-weight="normal" textLength="10.7" lengthAdjust="spacingAndGlyphs">View</text>
<text x="688.8" y="14.3" font-size="6.5" fill="#222" font-weight="normal" textLength="10.0" lengthAdjust="spacingAndGlyphs">Add</text>
<text x="712.0" y="14.3" font-size="6.5" fill="#222" font-weight="normal" textLength="25.5" lengthAdjust="spacingAndGlyphs">Animation</text>
<text x="751.0" y="14.3" font-size="6.5" fill="#222" font-weight="normal" textLength="13.0" lengthAdjust="spacingAndGlyphs">Tools</text>
<text x="777.0" y="14.3" font-size="6.5" fill="#222" font-weight="normal" textLength="11.8" lengthAdjust="spacingAndGlyphs">Help</text>
<text x="836.0" y="28.1" font-size="6" fill="#aaa" font-weight="normal" textLength="24.0" lengthAdjust="spacingAndGlyphs">Main view</text>
<text x="980.5" y="28.4" font-size="6.8" fill="#111" font-weight="normal" textLength="30.5" lengthAdjust="spacingAndGlyphs">30938.57 s</text>
<text x="624.0" y="288.3" font-size="7.3" fill="#111" font-weight="normal" textLength="91.0" lengthAdjust="spacingAndGlyphs">fuel_management.ame - ECAM</text>
<text x="619.0" y="301.8" font-size="6.5" fill="#222" font-weight="normal" textLength="7.0" lengthAdjust="spacingAndGlyphs">File</text>
<text x="640.8" y="301.8" font-size="6.5" fill="#222" font-weight="normal" textLength="9.2" lengthAdjust="spacingAndGlyphs">Edit</text>
<text x="663.6" y="301.8" font-size="6.5" fill="#222" font-weight="normal" textLength="11.4" lengthAdjust="spacingAndGlyphs">View</text>
<text x="688.5" y="301.8" font-size="6.5" fill="#222" font-weight="normal" textLength="25.5" lengthAdjust="spacingAndGlyphs">Animation</text>
<text x="727.0" y="301.8" font-size="6.5" fill="#222" font-weight="normal" textLength="14.0" lengthAdjust="spacingAndGlyphs">Tools</text>
<text x="753.0" y="301.8" font-size="6.5" fill="#222" font-weight="normal" textLength="11.5" lengthAdjust="spacingAndGlyphs">Help</text>
<text x="752.0" y="315.4" font-size="6.8" fill="#111" font-weight="normal" textLength="13.5" lengthAdjust="spacingAndGlyphs">58%</text>
<text x="857.0" y="315.4" font-size="6.8" fill="#111" font-weight="normal" textLength="30.0" lengthAdjust="spacingAndGlyphs">30938.57 s</text>
<text x="990.0" y="315.4" font-size="6.8" fill="#111" font-weight="normal" textLength="21.0" lengthAdjust="spacingAndGlyphs">1000 %</text>
</svg>
</body></html>
